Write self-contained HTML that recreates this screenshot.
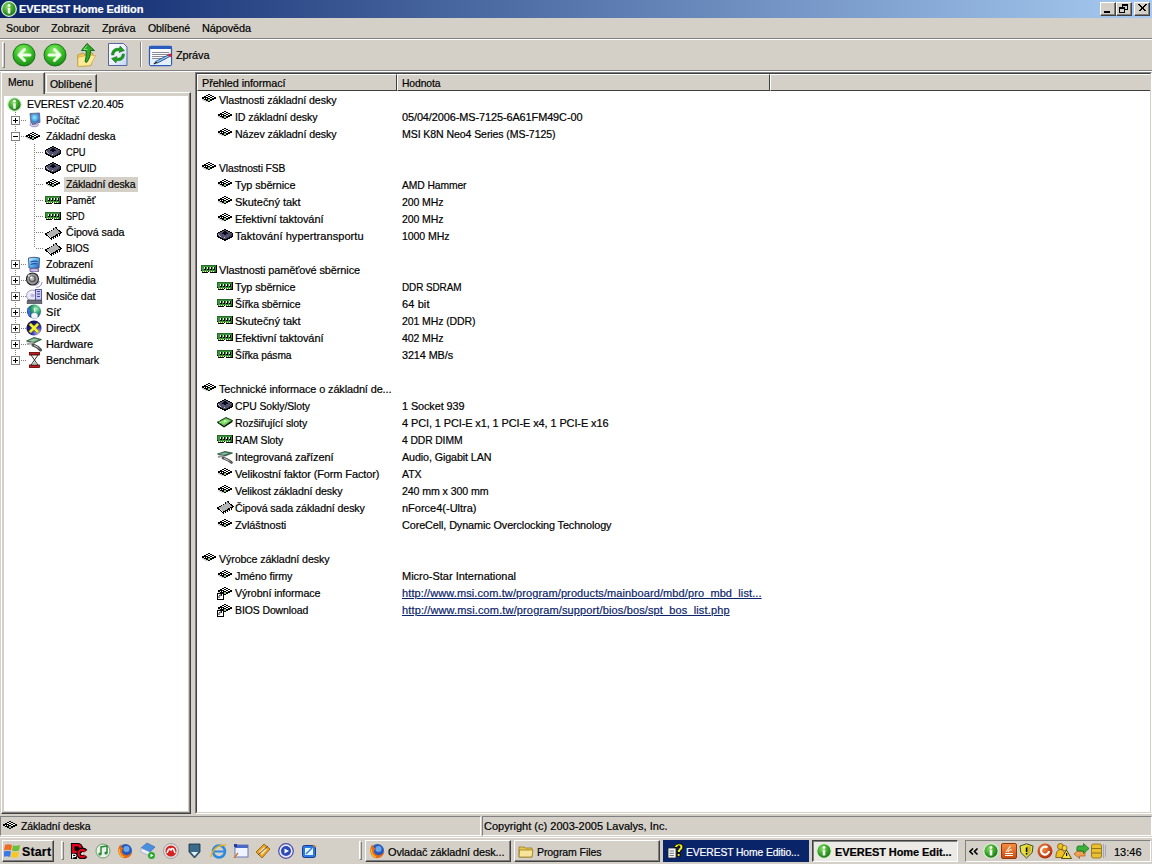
<!DOCTYPE html><html><head><meta charset="utf-8"><title>EVEREST</title><style>
*{margin:0;padding:0;box-sizing:border-box}
html,body{width:1152px;height:864px;overflow:hidden;background:#D4D0C8;font-family:"Liberation Sans",sans-serif;font-size:11px;color:#000}
.a{position:absolute}
.t{position:absolute;white-space:nowrap;line-height:13px;-webkit-text-stroke:0.2px currentColor}
.wb{position:absolute;top:2px;width:16px;height:14px;background:#D4D0C8;border-top:1px solid #fff;border-left:1px solid #fff;border-right:1px solid #404040;border-bottom:1px solid #404040;box-shadow:inset -1px -1px 0 #808080}
.hl{position:absolute;height:1px}
.vl{position:absolute;width:1px}
.btn{position:absolute;background:#D4D0C8;border-top:1px solid #fff;border-left:1px solid #fff;border-right:1px solid #404040;border-bottom:1px solid #404040;box-shadow:inset -1px -1px 0 #808080}
.sunk{position:absolute;border-top:1px solid #808080;border-left:1px solid #808080;border-bottom:1px solid #fff;border-right:1px solid #fff}
.dotv{position:absolute;width:1px;background:repeating-linear-gradient(to bottom,#808080 0 1px,transparent 1px 2px)}
.doth{position:absolute;height:1px;background:repeating-linear-gradient(to right,#808080 0 1px,transparent 1px 2px)}
.hbtn{position:absolute;background:#D4D0C8;border-top:1px solid #fff;border-left:1px solid #fff;border-right:1px solid #404040;border-bottom:1px solid #404040}
.lnk{color:#0A246A;text-decoration:underline}
</style></head><body>
<div class="a" style="left:0;top:0;width:1152px;height:18px;background:linear-gradient(to right,#0A246A,#A6CAF0)"></div>
<svg class="a" style="left:1px;top:1px" width="16" height="16" viewBox="0 0 16 16"><defs><radialGradient id="gi1_1" cx="40%" cy="35%" r="65%"><stop offset="0" stop-color="#8ADA6A"/><stop offset="0.6" stop-color="#38A02A"/><stop offset="1" stop-color="#1C7018"/></radialGradient></defs>
<circle cx="8.0" cy="8.0" r="7.3" fill="url(#gi1_1)" stroke="#D8F0D0" stroke-width="1.3"/>
<rect x="6.72" y="6.72" width="2.56" height="5.76" fill="#F4FFF0"/><circle cx="8.0" cy="4.48" r="1.44" fill="#F4FFF0"/></svg>
<div class="t" style="left:19px;top:3px;color:#fff;font-weight:bold;letter-spacing:-0.042px">EVEREST Home Edition</div>
<div class="wb" style="left:1100px"></div><div class="wb" style="left:1116px"></div><div class="wb" style="left:1134px"></div>
<div class="a" style="left:1104px;top:11px;width:6px;height:2px;background:#000"></div>
<svg class="a" style="left:1119px;top:4px" width="10" height="10" viewBox="0 0 10 10"><g fill="none" stroke="#000" shape-rendering="crispEdges"><rect x="3.5" y="0.5" width="5" height="5"/><line x1="3" y1="1.5" x2="9" y2="1.5"/><rect x="0.5" y="3.5" width="5" height="5" fill="#D4D0C8"/><line x1="0" y1="4.5" x2="6" y2="4.5"/></g></svg>
<svg class="a" style="left:1138px;top:4px" width="9" height="8" viewBox="0 0 9 8"><path d="M0.5 0.5 L7.5 7.5 M1.5 0.5 L8.5 7.5 M7.5 0.5 L0.5 7.5 M8.5 0.5 L1.5 7.5" stroke="#000" stroke-width="1" shape-rendering="crispEdges"/></svg>
<div class="t" style="left:6px;top:22px;;letter-spacing:-0.100px;transform:scaleX(0.9576);transform-origin:0 0">Soubor</div>
<div class="t" style="left:51px;top:22px;;letter-spacing:-0.100px;transform:scaleX(0.9859);transform-origin:0 0">Zobrazit</div>
<div class="t" style="left:102px;top:22px;;letter-spacing:-0.100px;transform:scaleX(0.9926);transform-origin:0 0">Zpráva</div>
<div class="t" style="left:148px;top:22px;;letter-spacing:-0.100px;transform:scaleX(0.9555);transform-origin:0 0">Oblíbené</div>
<div class="t" style="left:202px;top:22px;;letter-spacing:-0.100px;transform:scaleX(0.9908);transform-origin:0 0">Nápověda</div>
<div class="hl" style="left:0;top:38px;width:1152px;background:#808080"></div>
<div class="hl" style="left:0;top:39px;width:1152px;background:#fff"></div>
<div class="a" style="left:2px;top:42px;width:3px;height:26px;border-left:1px solid #fff;border-top:1px solid #fff;border-right:1px solid #808080;border-bottom:1px solid #808080"></div>
<svg class="a" style="left:12px;top:43px" width="24" height="24" viewBox="0 0 24 24"><defs><radialGradient id="gcb" cx="45%" cy="30%" r="70%"><stop offset="0" stop-color="#8EF06A"/><stop offset="0.55" stop-color="#3CC02A"/><stop offset="1" stop-color="#1A8A14"/></radialGradient></defs>
<circle cx="12" cy="12" r="11" fill="url(#gcb)" stroke="#18781A" stroke-width="1"/><path d="M12.5 6.5 L7 12 L12.5 17.5 M7.5 12 L18 12" stroke="#F0FFE8" stroke-width="3" fill="none" stroke-linecap="round" stroke-linejoin="round"/></svg>
<svg class="a" style="left:43px;top:43px" width="24" height="24" viewBox="0 0 24 24"><defs><radialGradient id="gcf" cx="45%" cy="30%" r="70%"><stop offset="0" stop-color="#8EF06A"/><stop offset="0.55" stop-color="#3CC02A"/><stop offset="1" stop-color="#1A8A14"/></radialGradient></defs>
<circle cx="12" cy="12" r="11" fill="url(#gcf)" stroke="#18781A" stroke-width="1"/><path d="M11.5 6.5 L17 12 L11.5 17.5 M16.5 12 L6 12" stroke="#F0FFE8" stroke-width="3" fill="none" stroke-linecap="round" stroke-linejoin="round"/></svg>
<svg class="a" style="left:75px;top:42px" width="22" height="25" viewBox="0 0 22 25"><path d="M2.5 13 L8 11 L9 12.5 L17 10.5 L18.5 14 L16 23.5 L3 24.5 Z" fill="#EBC85A" stroke="#C09838" stroke-width="0.9"/>
<path d="M3 15.5 L13 13 L20.5 13.5 L15.5 23.5 L3 24.5 Z" fill="#FBEA98" stroke="#D0A848" stroke-width="0.7"/>
<path d="M6.5 8.5 L12 1.5 L19.5 8.5 L15.5 8.5 C15.5 13 14.5 17 11.5 20.5 L10 19.5 C11 16 11.5 12.5 11 8.5 Z" fill="#2EAA2A" stroke="#0F5A10" stroke-width="0.9" stroke-linejoin="round"/>
<path d="M12 3.5 L8.8 7.6 L12.5 7.6" stroke="#8AE880" stroke-width="1" fill="none"/></svg>
<svg class="a" style="left:107px;top:42px" width="22" height="25" viewBox="0 0 22 25"><defs><linearGradient id="rfg" x1="0" y1="0" x2="1" y2="1"><stop offset="0" stop-color="#FFFFFF"/><stop offset="0.6" stop-color="#E8ECFF"/><stop offset="1" stop-color="#B8D8F4"/></linearGradient></defs>
<path d="M1.5 1.5 L16.5 1.5 L20 5 L20 23.5 L1.5 23.5 Z" fill="url(#rfg)" stroke="#5A64A0" stroke-width="1"/>
<path d="M4.5 13 C4.5 8 8 5.5 12.5 6.5 L13 4 L17.5 8.5 L12 10.5 L12.5 8.8 C9.5 8.2 7 10 6.8 13 Z" fill="#1E9E1E" stroke="#0A600A" stroke-width="0.5"/>
<path d="M17.5 12 C17.5 17 14 19.5 9.5 18.5 L9 21 L4.5 16.5 L10 14.5 L9.5 16.2 C12.5 16.8 15 15 15.2 12 Z" fill="#1E9E1E" stroke="#0A600A" stroke-width="0.5"/></svg>
<div class="a" style="left:140px;top:42px;width:2px;height:25px;border-left:1px solid #808080;border-right:1px solid #fff"></div>
<svg class="a" style="left:148px;top:45px" width="26" height="22" viewBox="0 0 26 22"><rect x="1.5" y="1.5" width="22" height="19" rx="1.5" fill="#fff" stroke="#2A5CC0" stroke-width="1.3"/>
<rect x="1" y="1" width="23" height="3" rx="1" fill="#2A5CC0"/>
<g stroke="#8A8A9E" stroke-width="1" shape-rendering="crispEdges"><line x1="4" y1="7.5" x2="21" y2="7.5"/><line x1="4" y1="9.5" x2="21" y2="9.5"/><line x1="4" y1="11.5" x2="19" y2="11.5"/><line x1="4" y1="13.5" x2="15" y2="13.5"/></g>
<rect x="2" y="14" width="21" height="6" fill="#E4F0FC"/>
<path d="M8 17.5 L21.5 10.5" stroke="#1A3A7A" stroke-width="3"/><path d="M8.5 17.2 L21.3 10.6" stroke="#8ACCF8" stroke-width="1.5"/>
<path d="M6 19 L8.5 17.2" stroke="#202020" stroke-width="1.5"/>
<circle cx="22" cy="10.3" r="1.8" fill="#D02030"/></svg>
<div class="t" style="left:176px;top:49px;;letter-spacing:-0.100px;transform:scaleX(0.9926);transform-origin:0 0">Zpráva</div>
<div class="hl" style="left:0;top:70px;width:1152px;background:#808080"></div>
<div class="hl" style="left:0;top:71px;width:1152px;background:#fff"></div>
<div class="a" style="left:46px;top:74px;width:51px;height:18px;border-top:1px solid #fff;border-left:1px solid #fff;border-right:1px solid #404040;box-shadow:inset -1px 0 0 #808080;background:#D4D0C8"></div>
<div class="t" style="left:50px;top:78px;;letter-spacing:-0.100px;transform:scaleX(0.9555);transform-origin:0 0">Oblíbené</div>
<div class="a" style="left:1px;top:92px;width:190px;height:722px;border-top:1px solid #fff;border-left:1px solid #fff;border-right:1px solid #404040;border-bottom:1px solid #404040;box-shadow:inset -1px -1px 0 #808080"></div>
<div class="a" style="left:1px;top:72px;width:44px;height:22px;border-top:1px solid #fff;border-left:1px solid #fff;border-right:1px solid #404040;box-shadow:inset -1px 0 0 #808080;background:#D4D0C8"></div>
<div class="t" style="left:8px;top:76px;;letter-spacing:-0.100px;transform:scaleX(0.9364);transform-origin:0 0">Menu</div>
<div class="a" style="left:4px;top:96px;width:184px;height:715px;background:#fff"></div>
<div class="dotv" style="left:15px;top:112px;height:248px"></div>
<div class="dotv" style="left:34px;top:144px;height:104px"></div>
<svg class="a" style="left:7px;top:97px" width="15" height="15" viewBox="0 0 15 15"><defs><radialGradient id="gi7_97" cx="40%" cy="35%" r="65%"><stop offset="0" stop-color="#8ADA6A"/><stop offset="0.6" stop-color="#38A02A"/><stop offset="1" stop-color="#1C7018"/></radialGradient></defs>
<circle cx="7.5" cy="7.5" r="6.8" fill="url(#gi7_97)" stroke="#D8F0D0" stroke-width="1.3"/>
<rect x="6.3" y="6.3" width="2.4" height="5.3999999999999995" fill="#F4FFF0"/><circle cx="7.5" cy="4.2" r="1.3499999999999999" fill="#F4FFF0"/></svg>
<div class="t" style="left:27px;top:98px;;letter-spacing:-0.100px;transform:scaleX(0.9561);transform-origin:0 0">EVEREST v2.20.405</div>
<div class="doth" style="left:21px;top:120px;width:5px"></div>
<div class="a" style="left:11px;top:116px;width:9px;height:9px;border:1px solid #808080;background:#fff"></div>
<div class="a" style="left:13px;top:120px;width:5px;height:1px;background:#000"></div>
<div class="a" style="left:15px;top:118px;width:1px;height:5px;background:#000"></div>
<svg class="a" style="left:26px;top:112px" width="16" height="16" viewBox="0 0 16 16"><defs><radialGradient id="pcg" cx="45%" cy="40%" r="70%"><stop offset="0" stop-color="#9AEAFF"/><stop offset="0.6" stop-color="#4AA8E8"/><stop offset="1" stop-color="#2A5AA8"/></radialGradient></defs>
<path d="M4 1.5 L13.5 1 L14 10.5 L5 11.5 Z" fill="#6A88B8" stroke="#4A6088" stroke-width="0.8"/>
<path d="M5 2.5 L12.5 2.2 L12.8 9.5 L5.8 10.3 Z" fill="url(#pcg)"/>
<path d="M4 12.5 C4 10.5 12 10 12.5 12.5 C12.5 15.5 4 15.5 4 12.5 Z" fill="#D8D0F0" stroke="#7A6AA8" stroke-width="0.7"/>
<path d="M6 11 L10 10.5 L10.5 12.5 L6 13 Z" fill="#5A70A8"/></svg>
<div class="t" style="left:46px;top:114px;;letter-spacing:-0.100px;transform:scaleX(0.9283);transform-origin:0 0">Počítač</div>
<div class="doth" style="left:21px;top:136px;width:5px"></div>
<div class="a" style="left:11px;top:132px;width:9px;height:9px;border:1px solid #808080;background:#fff"></div>
<div class="a" style="left:13px;top:136px;width:5px;height:1px;background:#000"></div>
<svg class="a" style="left:26px;top:132px" width="14" height="8" shape-rendering="crispEdges"><rect x="6" y="0" width="2" height="1" fill="#000"/><rect x="4" y="1" width="2" height="1" fill="#000"/><rect x="6" y="1" width="2" height="1" fill="#fff"/><rect x="8" y="1" width="2" height="1" fill="#000"/><rect x="2" y="2" width="2" height="1" fill="#000"/><rect x="4" y="2" width="2" height="1" fill="#fff"/><rect x="6" y="2" width="2" height="1" fill="#000"/><rect x="8" y="2" width="2" height="1" fill="#fff"/><rect x="10" y="2" width="2" height="1" fill="#000"/><rect x="0" y="3" width="6" height="1" fill="#000"/><rect x="6" y="3" width="2" height="1" fill="#fff"/><rect x="8" y="3" width="2" height="1" fill="#000"/><rect x="10" y="3" width="2" height="1" fill="#fff"/><rect x="12" y="3" width="2" height="1" fill="#000"/><rect x="0" y="4" width="2" height="1" fill="#000"/><rect x="2" y="4" width="1" height="1" fill="#fff"/><rect x="3" y="4" width="1" height="1" fill="#000"/><rect x="4" y="4" width="1" height="1" fill="#fff"/><rect x="5" y="4" width="3" height="1" fill="#000"/><rect x="8" y="4" width="2" height="1" fill="#fff"/><rect x="10" y="4" width="4" height="1" fill="#000"/><rect x="0" y="5" width="2" height="1" fill="#D0D0D0"/><rect x="2" y="5" width="4" height="1" fill="#000"/><rect x="6" y="5" width="2" height="1" fill="#86C886"/><rect x="8" y="5" width="4" height="1" fill="#000"/><rect x="1" y="6" width="3" height="1" fill="#D0D0D0"/><rect x="4" y="6" width="2" height="1" fill="#000"/><rect x="6" y="6" width="2" height="1" fill="#86C886"/><rect x="8" y="6" width="2" height="1" fill="#000"/><rect x="3" y="7" width="3" height="1" fill="#D0D0D0"/><rect x="6" y="7" width="2" height="1" fill="#000"/></svg>
<div class="t" style="left:46px;top:130px;;letter-spacing:-0.100px;transform:scaleX(0.9480);transform-origin:0 0">Základní deska</div>
<div class="doth" style="left:36px;top:152px;width:8px"></div>
<svg class="a" style="left:45px;top:146px" width="16" height="12" shape-rendering="crispEdges"><rect x="7" y="0" width="2" height="1" fill="#000"/><rect x="5" y="1" width="2" height="1" fill="#000"/><rect x="7" y="1" width="2" height="1" fill="#52526C"/><rect x="9" y="1" width="2" height="1" fill="#000"/><rect x="3" y="2" width="2" height="1" fill="#000"/><rect x="5" y="2" width="2" height="1" fill="#52526C"/><rect x="7" y="2" width="2" height="1" fill="#080818"/><rect x="9" y="2" width="2" height="1" fill="#52526C"/><rect x="11" y="2" width="2" height="1" fill="#000"/><rect x="1" y="3" width="2" height="1" fill="#000"/><rect x="3" y="3" width="3" height="1" fill="#52526C"/><rect x="6" y="3" width="4" height="1" fill="#080818"/><rect x="10" y="3" width="3" height="1" fill="#52526C"/><rect x="13" y="3" width="2" height="1" fill="#000"/><rect x="0" y="4" width="1" height="1" fill="#000"/><rect x="1" y="4" width="4" height="1" fill="#52526C"/><rect x="5" y="4" width="6" height="1" fill="#080818"/><rect x="11" y="4" width="4" height="1" fill="#52526C"/><rect x="15" y="4" width="1" height="1" fill="#000"/><rect x="0" y="5" width="1" height="1" fill="#000"/><rect x="1" y="5" width="1" height="1" fill="#C0C0D8"/><rect x="2" y="5" width="5" height="1" fill="#52526C"/><rect x="7" y="5" width="2" height="1" fill="#080818"/><rect x="9" y="5" width="5" height="1" fill="#52526C"/><rect x="14" y="5" width="1" height="1" fill="#34344A"/><rect x="15" y="5" width="1" height="1" fill="#000"/><rect x="0" y="6" width="1" height="1" fill="#000"/><rect x="1" y="6" width="1" height="1" fill="#52526C"/><rect x="2" y="6" width="1" height="1" fill="#C0C0D8"/><rect x="3" y="6" width="10" height="1" fill="#52526C"/><rect x="13" y="6" width="2" height="1" fill="#34344A"/><rect x="15" y="6" width="1" height="1" fill="#000"/><rect x="0" y="7" width="2" height="1" fill="#000"/><rect x="2" y="7" width="1" height="1" fill="#52526C"/><rect x="3" y="7" width="1" height="1" fill="#C0C0D8"/><rect x="4" y="7" width="8" height="1" fill="#52526C"/><rect x="12" y="7" width="2" height="1" fill="#34344A"/><rect x="14" y="7" width="2" height="1" fill="#000"/><rect x="1" y="8" width="3" height="1" fill="#000"/><rect x="4" y="8" width="3" height="1" fill="#52526C"/><rect x="7" y="8" width="1" height="1" fill="#C0C0D8"/><rect x="8" y="8" width="3" height="1" fill="#52526C"/><rect x="11" y="8" width="1" height="1" fill="#34344A"/><rect x="12" y="8" width="3" height="1" fill="#000"/><rect x="3" y="9" width="3" height="1" fill="#000"/><rect x="6" y="9" width="3" height="1" fill="#52526C"/><rect x="9" y="9" width="1" height="1" fill="#34344A"/><rect x="10" y="9" width="3" height="1" fill="#000"/><rect x="5" y="10" width="6" height="1" fill="#000"/><rect x="7" y="11" width="2" height="1" fill="#000"/></svg>
<div class="t" style="left:66px;top:146px;;letter-spacing:-0.100px;transform:scaleX(0.8466);transform-origin:0 0">CPU</div>
<div class="doth" style="left:36px;top:168px;width:8px"></div>
<svg class="a" style="left:45px;top:162px" width="16" height="12" shape-rendering="crispEdges"><rect x="7" y="0" width="2" height="1" fill="#000"/><rect x="5" y="1" width="2" height="1" fill="#000"/><rect x="7" y="1" width="2" height="1" fill="#52526C"/><rect x="9" y="1" width="2" height="1" fill="#000"/><rect x="3" y="2" width="2" height="1" fill="#000"/><rect x="5" y="2" width="2" height="1" fill="#52526C"/><rect x="7" y="2" width="2" height="1" fill="#080818"/><rect x="9" y="2" width="2" height="1" fill="#52526C"/><rect x="11" y="2" width="2" height="1" fill="#000"/><rect x="1" y="3" width="2" height="1" fill="#000"/><rect x="3" y="3" width="3" height="1" fill="#52526C"/><rect x="6" y="3" width="4" height="1" fill="#080818"/><rect x="10" y="3" width="3" height="1" fill="#52526C"/><rect x="13" y="3" width="2" height="1" fill="#000"/><rect x="0" y="4" width="1" height="1" fill="#000"/><rect x="1" y="4" width="4" height="1" fill="#52526C"/><rect x="5" y="4" width="6" height="1" fill="#080818"/><rect x="11" y="4" width="4" height="1" fill="#52526C"/><rect x="15" y="4" width="1" height="1" fill="#000"/><rect x="0" y="5" width="1" height="1" fill="#000"/><rect x="1" y="5" width="1" height="1" fill="#C0C0D8"/><rect x="2" y="5" width="5" height="1" fill="#52526C"/><rect x="7" y="5" width="2" height="1" fill="#080818"/><rect x="9" y="5" width="5" height="1" fill="#52526C"/><rect x="14" y="5" width="1" height="1" fill="#34344A"/><rect x="15" y="5" width="1" height="1" fill="#000"/><rect x="0" y="6" width="1" height="1" fill="#000"/><rect x="1" y="6" width="1" height="1" fill="#52526C"/><rect x="2" y="6" width="1" height="1" fill="#C0C0D8"/><rect x="3" y="6" width="10" height="1" fill="#52526C"/><rect x="13" y="6" width="2" height="1" fill="#34344A"/><rect x="15" y="6" width="1" height="1" fill="#000"/><rect x="0" y="7" width="2" height="1" fill="#000"/><rect x="2" y="7" width="1" height="1" fill="#52526C"/><rect x="3" y="7" width="1" height="1" fill="#C0C0D8"/><rect x="4" y="7" width="8" height="1" fill="#52526C"/><rect x="12" y="7" width="2" height="1" fill="#34344A"/><rect x="14" y="7" width="2" height="1" fill="#000"/><rect x="1" y="8" width="3" height="1" fill="#000"/><rect x="4" y="8" width="3" height="1" fill="#52526C"/><rect x="7" y="8" width="1" height="1" fill="#C0C0D8"/><rect x="8" y="8" width="3" height="1" fill="#52526C"/><rect x="11" y="8" width="1" height="1" fill="#34344A"/><rect x="12" y="8" width="3" height="1" fill="#000"/><rect x="3" y="9" width="3" height="1" fill="#000"/><rect x="6" y="9" width="3" height="1" fill="#52526C"/><rect x="9" y="9" width="1" height="1" fill="#34344A"/><rect x="10" y="9" width="3" height="1" fill="#000"/><rect x="5" y="10" width="6" height="1" fill="#000"/><rect x="7" y="11" width="2" height="1" fill="#000"/></svg>
<div class="t" style="left:66px;top:162px;;letter-spacing:-0.100px;transform:scaleX(0.9015);transform-origin:0 0">CPUID</div>
<div class="doth" style="left:36px;top:184px;width:8px"></div>
<svg class="a" style="left:46px;top:179px" width="14" height="8" shape-rendering="crispEdges"><rect x="6" y="0" width="2" height="1" fill="#000"/><rect x="4" y="1" width="2" height="1" fill="#000"/><rect x="6" y="1" width="2" height="1" fill="#fff"/><rect x="8" y="1" width="2" height="1" fill="#000"/><rect x="2" y="2" width="2" height="1" fill="#000"/><rect x="4" y="2" width="2" height="1" fill="#fff"/><rect x="6" y="2" width="2" height="1" fill="#000"/><rect x="8" y="2" width="2" height="1" fill="#fff"/><rect x="10" y="2" width="2" height="1" fill="#000"/><rect x="0" y="3" width="6" height="1" fill="#000"/><rect x="6" y="3" width="2" height="1" fill="#fff"/><rect x="8" y="3" width="2" height="1" fill="#000"/><rect x="10" y="3" width="2" height="1" fill="#fff"/><rect x="12" y="3" width="2" height="1" fill="#000"/><rect x="0" y="4" width="2" height="1" fill="#000"/><rect x="2" y="4" width="1" height="1" fill="#fff"/><rect x="3" y="4" width="1" height="1" fill="#000"/><rect x="4" y="4" width="1" height="1" fill="#fff"/><rect x="5" y="4" width="3" height="1" fill="#000"/><rect x="8" y="4" width="2" height="1" fill="#fff"/><rect x="10" y="4" width="4" height="1" fill="#000"/><rect x="0" y="5" width="2" height="1" fill="#D0D0D0"/><rect x="2" y="5" width="4" height="1" fill="#000"/><rect x="6" y="5" width="2" height="1" fill="#86C886"/><rect x="8" y="5" width="4" height="1" fill="#000"/><rect x="1" y="6" width="3" height="1" fill="#D0D0D0"/><rect x="4" y="6" width="2" height="1" fill="#000"/><rect x="6" y="6" width="2" height="1" fill="#86C886"/><rect x="8" y="6" width="2" height="1" fill="#000"/><rect x="3" y="7" width="3" height="1" fill="#D0D0D0"/><rect x="6" y="7" width="2" height="1" fill="#000"/></svg>
<div class="a" style="left:64px;top:177px;width:74px;height:15px;background:#D4D0C8"></div>
<div class="t" style="left:66px;top:178px;;letter-spacing:-0.100px;transform:scaleX(0.9480);transform-origin:0 0">Základní deska</div>
<div class="doth" style="left:36px;top:200px;width:8px"></div>
<svg class="a" style="left:45px;top:196px" width="16" height="8" shape-rendering="crispEdges"><rect x="0" y="0" width="15" height="1" fill="#2A6A2A"/><rect x="15" y="0" width="1" height="1" fill="#000"/><rect x="0" y="1" width="1" height="1" fill="#2A6A2A"/><rect x="1" y="1" width="13" height="1" fill="#3A963A"/><rect x="14" y="1" width="1" height="1" fill="#2A6A2A"/><rect x="15" y="1" width="1" height="1" fill="#000"/><rect x="0" y="2" width="1" height="1" fill="#2A6A2A"/><rect x="1" y="2" width="2" height="1" fill="#3A963A"/><rect x="3" y="2" width="1" height="1" fill="#D8FFD0"/><rect x="4" y="2" width="1" height="1" fill="#000"/><rect x="5" y="2" width="1" height="1" fill="#3A963A"/><rect x="6" y="2" width="1" height="1" fill="#D8FFD0"/><rect x="7" y="2" width="1" height="1" fill="#000"/><rect x="8" y="2" width="1" height="1" fill="#3A963A"/><rect x="9" y="2" width="1" height="1" fill="#D8FFD0"/><rect x="10" y="2" width="1" height="1" fill="#000"/><rect x="11" y="2" width="1" height="1" fill="#3A963A"/><rect x="12" y="2" width="1" height="1" fill="#D8FFD0"/><rect x="13" y="2" width="1" height="1" fill="#000"/><rect x="14" y="2" width="1" height="1" fill="#3A963A"/><rect x="15" y="2" width="1" height="1" fill="#000"/><rect x="0" y="3" width="1" height="1" fill="#2A6A2A"/><rect x="1" y="3" width="2" height="1" fill="#3A963A"/><rect x="3" y="3" width="1" height="1" fill="#D8FFD0"/><rect x="4" y="3" width="1" height="1" fill="#000"/><rect x="5" y="3" width="1" height="1" fill="#3A963A"/><rect x="6" y="3" width="1" height="1" fill="#D8FFD0"/><rect x="7" y="3" width="1" height="1" fill="#000"/><rect x="8" y="3" width="1" height="1" fill="#3A963A"/><rect x="9" y="3" width="1" height="1" fill="#D8FFD0"/><rect x="10" y="3" width="1" height="1" fill="#000"/><rect x="11" y="3" width="1" height="1" fill="#3A963A"/><rect x="12" y="3" width="1" height="1" fill="#D8FFD0"/><rect x="13" y="3" width="1" height="1" fill="#000"/><rect x="14" y="3" width="1" height="1" fill="#3A963A"/><rect x="15" y="3" width="1" height="1" fill="#000"/><rect x="0" y="4" width="1" height="1" fill="#2A6A2A"/><rect x="1" y="4" width="2" height="1" fill="#3A963A"/><rect x="3" y="4" width="2" height="1" fill="#000"/><rect x="5" y="4" width="1" height="1" fill="#3A963A"/><rect x="6" y="4" width="2" height="1" fill="#000"/><rect x="8" y="4" width="1" height="1" fill="#3A963A"/><rect x="9" y="4" width="2" height="1" fill="#000"/><rect x="11" y="4" width="1" height="1" fill="#3A963A"/><rect x="12" y="4" width="2" height="1" fill="#000"/><rect x="14" y="4" width="1" height="1" fill="#3A963A"/><rect x="15" y="4" width="1" height="1" fill="#000"/><rect x="0" y="5" width="1" height="1" fill="#000"/><rect x="1" y="5" width="13" height="1" fill="#3A963A"/><rect x="14" y="5" width="1" height="1" fill="#2A6A2A"/><rect x="15" y="5" width="1" height="1" fill="#000"/><rect x="1" y="6" width="1" height="1" fill="#3A963A"/><rect x="2" y="6" width="1" height="1" fill="#F0F0A0"/><rect x="3" y="6" width="1" height="1" fill="#3A963A"/><rect x="4" y="6" width="1" height="1" fill="#F0F0A0"/><rect x="5" y="6" width="1" height="1" fill="#3A963A"/><rect x="6" y="6" width="1" height="1" fill="#F0F0A0"/><rect x="7" y="6" width="1" height="1" fill="#000"/><rect x="8" y="6" width="1" height="1" fill="#F0F0A0"/><rect x="9" y="6" width="1" height="1" fill="#3A963A"/><rect x="10" y="6" width="1" height="1" fill="#F0F0A0"/><rect x="11" y="6" width="1" height="1" fill="#3A963A"/><rect x="12" y="6" width="1" height="1" fill="#F0F0A0"/><rect x="13" y="6" width="1" height="1" fill="#3A963A"/><rect x="14" y="6" width="1" height="1" fill="#2A6A2A"/><rect x="15" y="6" width="1" height="1" fill="#000"/><rect x="1" y="7" width="6" height="1" fill="#000"/><rect x="9" y="7" width="7" height="1" fill="#000"/></svg>
<div class="t" style="left:66px;top:194px;;letter-spacing:-0.100px;transform:scaleX(0.9084);transform-origin:0 0">Paměť</div>
<div class="doth" style="left:36px;top:216px;width:8px"></div>
<svg class="a" style="left:45px;top:212px" width="16" height="8" shape-rendering="crispEdges"><rect x="0" y="0" width="15" height="1" fill="#2A6A2A"/><rect x="15" y="0" width="1" height="1" fill="#000"/><rect x="0" y="1" width="1" height="1" fill="#2A6A2A"/><rect x="1" y="1" width="13" height="1" fill="#3A963A"/><rect x="14" y="1" width="1" height="1" fill="#2A6A2A"/><rect x="15" y="1" width="1" height="1" fill="#000"/><rect x="0" y="2" width="1" height="1" fill="#2A6A2A"/><rect x="1" y="2" width="2" height="1" fill="#3A963A"/><rect x="3" y="2" width="1" height="1" fill="#D8FFD0"/><rect x="4" y="2" width="1" height="1" fill="#000"/><rect x="5" y="2" width="1" height="1" fill="#3A963A"/><rect x="6" y="2" width="1" height="1" fill="#D8FFD0"/><rect x="7" y="2" width="1" height="1" fill="#000"/><rect x="8" y="2" width="1" height="1" fill="#3A963A"/><rect x="9" y="2" width="1" height="1" fill="#D8FFD0"/><rect x="10" y="2" width="1" height="1" fill="#000"/><rect x="11" y="2" width="1" height="1" fill="#3A963A"/><rect x="12" y="2" width="1" height="1" fill="#D8FFD0"/><rect x="13" y="2" width="1" height="1" fill="#000"/><rect x="14" y="2" width="1" height="1" fill="#3A963A"/><rect x="15" y="2" width="1" height="1" fill="#000"/><rect x="0" y="3" width="1" height="1" fill="#2A6A2A"/><rect x="1" y="3" width="2" height="1" fill="#3A963A"/><rect x="3" y="3" width="1" height="1" fill="#D8FFD0"/><rect x="4" y="3" width="1" height="1" fill="#000"/><rect x="5" y="3" width="1" height="1" fill="#3A963A"/><rect x="6" y="3" width="1" height="1" fill="#D8FFD0"/><rect x="7" y="3" width="1" height="1" fill="#000"/><rect x="8" y="3" width="1" height="1" fill="#3A963A"/><rect x="9" y="3" width="1" height="1" fill="#D8FFD0"/><rect x="10" y="3" width="1" height="1" fill="#000"/><rect x="11" y="3" width="1" height="1" fill="#3A963A"/><rect x="12" y="3" width="1" height="1" fill="#D8FFD0"/><rect x="13" y="3" width="1" height="1" fill="#000"/><rect x="14" y="3" width="1" height="1" fill="#3A963A"/><rect x="15" y="3" width="1" height="1" fill="#000"/><rect x="0" y="4" width="1" height="1" fill="#2A6A2A"/><rect x="1" y="4" width="2" height="1" fill="#3A963A"/><rect x="3" y="4" width="2" height="1" fill="#000"/><rect x="5" y="4" width="1" height="1" fill="#3A963A"/><rect x="6" y="4" width="2" height="1" fill="#000"/><rect x="8" y="4" width="1" height="1" fill="#3A963A"/><rect x="9" y="4" width="2" height="1" fill="#000"/><rect x="11" y="4" width="1" height="1" fill="#3A963A"/><rect x="12" y="4" width="2" height="1" fill="#000"/><rect x="14" y="4" width="1" height="1" fill="#3A963A"/><rect x="15" y="4" width="1" height="1" fill="#000"/><rect x="0" y="5" width="1" height="1" fill="#000"/><rect x="1" y="5" width="13" height="1" fill="#3A963A"/><rect x="14" y="5" width="1" height="1" fill="#2A6A2A"/><rect x="15" y="5" width="1" height="1" fill="#000"/><rect x="1" y="6" width="1" height="1" fill="#3A963A"/><rect x="2" y="6" width="1" height="1" fill="#F0F0A0"/><rect x="3" y="6" width="1" height="1" fill="#3A963A"/><rect x="4" y="6" width="1" height="1" fill="#F0F0A0"/><rect x="5" y="6" width="1" height="1" fill="#3A963A"/><rect x="6" y="6" width="1" height="1" fill="#F0F0A0"/><rect x="7" y="6" width="1" height="1" fill="#000"/><rect x="8" y="6" width="1" height="1" fill="#F0F0A0"/><rect x="9" y="6" width="1" height="1" fill="#3A963A"/><rect x="10" y="6" width="1" height="1" fill="#F0F0A0"/><rect x="11" y="6" width="1" height="1" fill="#3A963A"/><rect x="12" y="6" width="1" height="1" fill="#F0F0A0"/><rect x="13" y="6" width="1" height="1" fill="#3A963A"/><rect x="14" y="6" width="1" height="1" fill="#2A6A2A"/><rect x="15" y="6" width="1" height="1" fill="#000"/><rect x="1" y="7" width="6" height="1" fill="#000"/><rect x="9" y="7" width="7" height="1" fill="#000"/></svg>
<div class="t" style="left:66px;top:210px;;letter-spacing:-0.100px;transform:scaleX(0.8250);transform-origin:0 0">SPD</div>
<div class="doth" style="left:36px;top:232px;width:8px"></div>
<svg class="a" style="left:45px;top:227px" width="17" height="13" viewBox="0 0 17 13"><g shape-rendering="crispEdges"><rect x="6" y="11" width="1" height="2" fill="#000"/><rect x="8" y="10" width="1" height="2" fill="#000"/><rect x="10" y="9" width="1" height="2" fill="#000"/><rect x="12" y="8" width="1" height="2" fill="#000"/><rect x="14" y="7" width="1" height="2" fill="#000"/><rect x="15" y="5" width="1" height="2" fill="#000"/><polygon points="0.5,7 11,0.5 16,5.5 5.5,11.5" fill="#B4B4B4"/><path d="M1.5 7.5 L5.5 11" stroke="#F4F4F4" stroke-width="1.2"/><path d="M11 1 L16 5.5 L5.5 11.5 L0.5 7" fill="none" stroke="#000" stroke-width="1"/><path d="M0.5 7 L11 0.5" fill="none" stroke="#000" stroke-width="1" stroke-dasharray="1.2 1"/><rect x="10" y="0" width="2" height="1" fill="#000"/></g></svg>
<div class="t" style="left:66px;top:226px;;letter-spacing:-0.100px;transform:scaleX(0.9725);transform-origin:0 0">Čipová sada</div>
<div class="doth" style="left:36px;top:248px;width:8px"></div>
<svg class="a" style="left:45px;top:243px" width="17" height="13" viewBox="0 0 17 13"><g shape-rendering="crispEdges"><rect x="6" y="11" width="1" height="2" fill="#000"/><rect x="8" y="10" width="1" height="2" fill="#000"/><rect x="10" y="9" width="1" height="2" fill="#000"/><rect x="12" y="8" width="1" height="2" fill="#000"/><rect x="14" y="7" width="1" height="2" fill="#000"/><rect x="15" y="5" width="1" height="2" fill="#000"/><polygon points="0.5,7 11,0.5 16,5.5 5.5,11.5" fill="#B4B4B4"/><path d="M1.5 7.5 L5.5 11" stroke="#F4F4F4" stroke-width="1.2"/><path d="M11 1 L16 5.5 L5.5 11.5 L0.5 7" fill="none" stroke="#000" stroke-width="1"/><path d="M0.5 7 L11 0.5" fill="none" stroke="#000" stroke-width="1" stroke-dasharray="1.2 1"/><rect x="10" y="0" width="2" height="1" fill="#000"/></g></svg>
<div class="t" style="left:66px;top:242px;;letter-spacing:-0.100px;transform:scaleX(0.8886);transform-origin:0 0">BIOS</div>
<div class="doth" style="left:21px;top:264px;width:5px"></div>
<div class="a" style="left:11px;top:260px;width:9px;height:9px;border:1px solid #808080;background:#fff"></div>
<div class="a" style="left:13px;top:264px;width:5px;height:1px;background:#000"></div>
<div class="a" style="left:15px;top:262px;width:1px;height:5px;background:#000"></div>
<svg class="a" style="left:26px;top:256px" width="16" height="16" viewBox="0 0 16 16"><defs><linearGradient id="dsg" x1="0" y1="0" x2="1" y2="1"><stop offset="0" stop-color="#D8FCFF"/><stop offset="0.5" stop-color="#58B8E8"/><stop offset="1" stop-color="#2A58B8"/></linearGradient></defs>
<path d="M2.5 2 Q8 0.5 13.5 2 L13 12 Q8 13 3 12 Z" fill="url(#dsg)" stroke="#3A4A88" stroke-width="0.9"/>
<path d="M4.5 6 Q8 4.5 11.5 5.5 M4.5 8.5 Q8 7 11.5 8" stroke="#2A4AA8" stroke-width="1.1" fill="none"/>
<path d="M4 13 Q8 11.5 12.5 13 L12.5 15.5 Q8 16.5 4 15.5 Z" fill="#C8C0E8" stroke="#5A4A88" stroke-width="0.8"/></svg>
<div class="t" style="left:46px;top:258px;;letter-spacing:-0.100px;transform:scaleX(0.9665);transform-origin:0 0">Zobrazení</div>
<div class="doth" style="left:21px;top:280px;width:5px"></div>
<div class="a" style="left:11px;top:276px;width:9px;height:9px;border:1px solid #808080;background:#fff"></div>
<div class="a" style="left:13px;top:280px;width:5px;height:1px;background:#000"></div>
<div class="a" style="left:15px;top:278px;width:1px;height:5px;background:#000"></div>
<svg class="a" style="left:26px;top:272px" width="17" height="17" viewBox="0 0 17 17"><circle cx="6.5" cy="7" r="6" fill="#9A9A9A" stroke="#202020" stroke-width="1.1"/>
<circle cx="6.5" cy="7" r="3.6" fill="#606060"/><circle cx="6" cy="6.5" r="2.2" fill="#B8B8B8"/><circle cx="5.3" cy="5.5" r="1.1" fill="#fff"/>
<circle cx="2.8" cy="3.5" r="1" fill="#F0F0F0"/>
<path d="M9.5 13.5 Q13 12.5 13.5 9 M10.5 15.5 Q15.5 14.5 16 10" stroke="#8A8AC8" stroke-width="1" fill="none"/></svg>
<div class="t" style="left:46px;top:274px;;letter-spacing:-0.100px;transform:scaleX(0.9543);transform-origin:0 0">Multimédia</div>
<div class="doth" style="left:21px;top:296px;width:5px"></div>
<div class="a" style="left:11px;top:292px;width:9px;height:9px;border:1px solid #808080;background:#fff"></div>
<div class="a" style="left:13px;top:296px;width:5px;height:1px;background:#000"></div>
<div class="a" style="left:15px;top:294px;width:1px;height:5px;background:#000"></div>
<svg class="a" style="left:26px;top:288px" width="17" height="16" viewBox="0 0 17 16"><ellipse cx="6.5" cy="7.5" rx="6" ry="5.5" fill="#E8E8F8" stroke="#8A8AB0" stroke-width="0.8"/>
<ellipse cx="6.5" cy="7.5" rx="2" ry="1.8" fill="#B8B8D8"/><path d="M3 5 Q5 3.5 7 4" stroke="#fff" stroke-width="1" fill="none"/>
<rect x="9.5" y="1.5" width="6" height="11" fill="#C8C8F0" stroke="#3A3A88" stroke-width="0.8"/>
<path d="M11 3.5 L14 3.5 M11 6 L14 6 M11 8.5 L14 8.5" stroke="#3A3A98" stroke-width="0.9"/>
<path d="M1.5 12 L15.5 12 L16 15.5 L1 15.5 Z" fill="#6A6A78" stroke="#303040" stroke-width="0.6"/></svg>
<div class="t" style="left:46px;top:290px;;letter-spacing:-0.100px;transform:scaleX(0.9690);transform-origin:0 0">Nosiče dat</div>
<div class="doth" style="left:21px;top:312px;width:5px"></div>
<div class="a" style="left:11px;top:308px;width:9px;height:9px;border:1px solid #808080;background:#fff"></div>
<div class="a" style="left:13px;top:312px;width:5px;height:1px;background:#000"></div>
<div class="a" style="left:15px;top:310px;width:1px;height:5px;background:#000"></div>
<svg class="a" style="left:26px;top:304px" width="16" height="16" viewBox="0 0 16 16"><defs><radialGradient id="ng" cx="65%" cy="30%" r="75%"><stop offset="0" stop-color="#A8F0C0"/><stop offset="0.45" stop-color="#2A9A6A"/><stop offset="1" stop-color="#10308A"/></radialGradient></defs>
<circle cx="8" cy="7.5" r="7" fill="url(#ng)"/><path d="M2 4 Q4 9 3 12" stroke="#3A70D8" stroke-width="2.2" fill="none"/>
<path d="M8.5 4 L9 8" stroke="#E8F8F0" stroke-width="1.2"/>
<ellipse cx="8.5" cy="11.8" rx="3.3" ry="3" fill="#F6F6FF" stroke="#B0B0D0" stroke-width="0.6"/></svg>
<div class="t" style="left:46px;top:306px;">Síť</div>
<div class="doth" style="left:21px;top:328px;width:5px"></div>
<div class="a" style="left:11px;top:324px;width:9px;height:9px;border:1px solid #808080;background:#fff"></div>
<div class="a" style="left:13px;top:328px;width:5px;height:1px;background:#000"></div>
<div class="a" style="left:15px;top:326px;width:1px;height:5px;background:#000"></div>
<svg class="a" style="left:26px;top:320px" width="16" height="16" viewBox="0 0 16 16"><defs><radialGradient id="dxg" cx="75%" cy="80%" r="85%"><stop offset="0" stop-color="#C0B8F0"/><stop offset="0.45" stop-color="#3030B0"/><stop offset="1" stop-color="#0A0A50"/></radialGradient></defs>
<circle cx="8" cy="8" r="7.6" fill="url(#dxg)"/>
<path d="M2.8 4.8 L4.8 2.8 L8 6 L11.2 2.8 L13.2 4.8 L10 8 L13.2 11.2 L11.2 13.2 L8 10 L4.8 13.2 L2.8 11.2 L6 8 Z" fill="#F0F030" stroke="#707000" stroke-width="0.5"/></svg>
<div class="t" style="left:46px;top:322px;;letter-spacing:-0.100px;transform:scaleX(0.9729);transform-origin:0 0">DirectX</div>
<div class="doth" style="left:21px;top:344px;width:5px"></div>
<div class="a" style="left:11px;top:340px;width:9px;height:9px;border:1px solid #808080;background:#fff"></div>
<div class="a" style="left:13px;top:344px;width:5px;height:1px;background:#000"></div>
<div class="a" style="left:15px;top:342px;width:1px;height:5px;background:#000"></div>
<svg class="a" style="left:26px;top:336px" width="16" height="16" viewBox="0 0 16 16"><path d="M0.5 5 L8 1.5 L15.5 3.5 L8 7 Z" fill="#4A8A5A" stroke="#203A28" stroke-width="0.7"/>
<path d="M2.5 4.8 L8 2.5 L12.5 3.6 L7.5 5.8 Z" fill="#9AC8A8"/>
<path d="M1 8 L6 7 L8.5 8.5" stroke="#A8A8A8" stroke-width="2.4" fill="none"/>
<path d="M7 9 C10 10 12.5 11.5 14.5 14" stroke="#505050" stroke-width="3" fill="none" stroke-linecap="round"/>
<path d="M8 9.5 C10.5 10.3 12 11.2 13 12.5" stroke="#E0E0E0" stroke-width="0.9" fill="none"/></svg>
<div class="t" style="left:46px;top:338px;;letter-spacing:-0.084px">Hardware</div>
<div class="doth" style="left:21px;top:360px;width:5px"></div>
<div class="a" style="left:11px;top:356px;width:9px;height:9px;border:1px solid #808080;background:#fff"></div>
<div class="a" style="left:13px;top:360px;width:5px;height:1px;background:#000"></div>
<div class="a" style="left:15px;top:358px;width:1px;height:5px;background:#000"></div>
<svg class="a" style="left:29px;top:352px" width="11" height="16" viewBox="0 0 11 16"><rect x="0.5" y="0.5" width="10" height="2.5" fill="#D01818" stroke="#500" stroke-width="0.8"/>
<rect x="0.5" y="13" width="10" height="2.5" fill="#D01818" stroke="#500" stroke-width="0.8"/>
<path d="M2 3 L9 3 L5.5 8 L9 13 L2 13 L5.5 8 Z" fill="#F4F4F0" stroke="#202020" stroke-width="0.9"/>
<path d="M3.3 12.2 L7.7 12.2 L5.5 9.5 Z" fill="#A8C8B8"/></svg>
<div class="t" style="left:46px;top:354px;;letter-spacing:-0.100px;transform:scaleX(0.9664);transform-origin:0 0">Benchmark</div>
<div class="sunk" style="left:195px;top:72px;width:957px;height:742px"></div>
<div class="a" style="left:196px;top:73px;width:955px;height:740px;background:#fff;border-top:1px solid #404040;border-left:1px solid #404040;border-bottom:1px solid #D4D0C8;border-right:1px solid #D4D0C8"></div>
<div class="hbtn" style="left:197px;top:74px;width:200px;height:17px"></div>
<div class="hbtn" style="left:397px;top:74px;width:373px;height:17px"></div>
<div class="hbtn" style="left:770px;top:74px;width:380px;height:17px;border-right:none"></div>
<div class="t" style="left:202px;top:77px;;letter-spacing:-0.100px;transform:scaleX(0.9868);transform-origin:0 0">Přehled informací</div>
<div class="t" style="left:402px;top:77px;;letter-spacing:-0.100px;transform:scaleX(0.9392);transform-origin:0 0">Hodnota</div>
<svg class="a" style="left:202px;top:94px" width="14" height="8" shape-rendering="crispEdges"><rect x="6" y="0" width="2" height="1" fill="#000"/><rect x="4" y="1" width="2" height="1" fill="#000"/><rect x="6" y="1" width="2" height="1" fill="#fff"/><rect x="8" y="1" width="2" height="1" fill="#000"/><rect x="2" y="2" width="2" height="1" fill="#000"/><rect x="4" y="2" width="2" height="1" fill="#fff"/><rect x="6" y="2" width="2" height="1" fill="#000"/><rect x="8" y="2" width="2" height="1" fill="#fff"/><rect x="10" y="2" width="2" height="1" fill="#000"/><rect x="0" y="3" width="6" height="1" fill="#000"/><rect x="6" y="3" width="2" height="1" fill="#fff"/><rect x="8" y="3" width="2" height="1" fill="#000"/><rect x="10" y="3" width="2" height="1" fill="#fff"/><rect x="12" y="3" width="2" height="1" fill="#000"/><rect x="0" y="4" width="2" height="1" fill="#000"/><rect x="2" y="4" width="1" height="1" fill="#fff"/><rect x="3" y="4" width="1" height="1" fill="#000"/><rect x="4" y="4" width="1" height="1" fill="#fff"/><rect x="5" y="4" width="3" height="1" fill="#000"/><rect x="8" y="4" width="2" height="1" fill="#fff"/><rect x="10" y="4" width="4" height="1" fill="#000"/><rect x="0" y="5" width="2" height="1" fill="#D0D0D0"/><rect x="2" y="5" width="4" height="1" fill="#000"/><rect x="6" y="5" width="2" height="1" fill="#86C886"/><rect x="8" y="5" width="4" height="1" fill="#000"/><rect x="1" y="6" width="3" height="1" fill="#D0D0D0"/><rect x="4" y="6" width="2" height="1" fill="#000"/><rect x="6" y="6" width="2" height="1" fill="#86C886"/><rect x="8" y="6" width="2" height="1" fill="#000"/><rect x="3" y="7" width="3" height="1" fill="#D0D0D0"/><rect x="6" y="7" width="2" height="1" fill="#000"/></svg>
<div class="t" style="left:219px;top:94px;;letter-spacing:-0.100px;transform:scaleX(0.9701);transform-origin:0 0">Vlastnosti základní desky</div>
<svg class="a" style="left:218px;top:111px" width="14" height="8" shape-rendering="crispEdges"><rect x="6" y="0" width="2" height="1" fill="#000"/><rect x="4" y="1" width="2" height="1" fill="#000"/><rect x="6" y="1" width="2" height="1" fill="#fff"/><rect x="8" y="1" width="2" height="1" fill="#000"/><rect x="2" y="2" width="2" height="1" fill="#000"/><rect x="4" y="2" width="2" height="1" fill="#fff"/><rect x="6" y="2" width="2" height="1" fill="#000"/><rect x="8" y="2" width="2" height="1" fill="#fff"/><rect x="10" y="2" width="2" height="1" fill="#000"/><rect x="0" y="3" width="6" height="1" fill="#000"/><rect x="6" y="3" width="2" height="1" fill="#fff"/><rect x="8" y="3" width="2" height="1" fill="#000"/><rect x="10" y="3" width="2" height="1" fill="#fff"/><rect x="12" y="3" width="2" height="1" fill="#000"/><rect x="0" y="4" width="2" height="1" fill="#000"/><rect x="2" y="4" width="1" height="1" fill="#fff"/><rect x="3" y="4" width="1" height="1" fill="#000"/><rect x="4" y="4" width="1" height="1" fill="#fff"/><rect x="5" y="4" width="3" height="1" fill="#000"/><rect x="8" y="4" width="2" height="1" fill="#fff"/><rect x="10" y="4" width="4" height="1" fill="#000"/><rect x="0" y="5" width="2" height="1" fill="#D0D0D0"/><rect x="2" y="5" width="4" height="1" fill="#000"/><rect x="6" y="5" width="2" height="1" fill="#86C886"/><rect x="8" y="5" width="4" height="1" fill="#000"/><rect x="1" y="6" width="3" height="1" fill="#D0D0D0"/><rect x="4" y="6" width="2" height="1" fill="#000"/><rect x="6" y="6" width="2" height="1" fill="#86C886"/><rect x="8" y="6" width="2" height="1" fill="#000"/><rect x="3" y="7" width="3" height="1" fill="#D0D0D0"/><rect x="6" y="7" width="2" height="1" fill="#000"/></svg>
<div class="t" style="left:235px;top:111px;;letter-spacing:-0.100px;transform:scaleX(0.9680);transform-origin:0 0">ID základní desky</div>
<div class="t" style="left:402px;top:111px;;letter-spacing:-0.100px;transform:scaleX(0.9935);transform-origin:0 0">05/04/2006-MS-7125-6A61FM49C-00</div>
<svg class="a" style="left:218px;top:128px" width="14" height="8" shape-rendering="crispEdges"><rect x="6" y="0" width="2" height="1" fill="#000"/><rect x="4" y="1" width="2" height="1" fill="#000"/><rect x="6" y="1" width="2" height="1" fill="#fff"/><rect x="8" y="1" width="2" height="1" fill="#000"/><rect x="2" y="2" width="2" height="1" fill="#000"/><rect x="4" y="2" width="2" height="1" fill="#fff"/><rect x="6" y="2" width="2" height="1" fill="#000"/><rect x="8" y="2" width="2" height="1" fill="#fff"/><rect x="10" y="2" width="2" height="1" fill="#000"/><rect x="0" y="3" width="6" height="1" fill="#000"/><rect x="6" y="3" width="2" height="1" fill="#fff"/><rect x="8" y="3" width="2" height="1" fill="#000"/><rect x="10" y="3" width="2" height="1" fill="#fff"/><rect x="12" y="3" width="2" height="1" fill="#000"/><rect x="0" y="4" width="2" height="1" fill="#000"/><rect x="2" y="4" width="1" height="1" fill="#fff"/><rect x="3" y="4" width="1" height="1" fill="#000"/><rect x="4" y="4" width="1" height="1" fill="#fff"/><rect x="5" y="4" width="3" height="1" fill="#000"/><rect x="8" y="4" width="2" height="1" fill="#fff"/><rect x="10" y="4" width="4" height="1" fill="#000"/><rect x="0" y="5" width="2" height="1" fill="#D0D0D0"/><rect x="2" y="5" width="4" height="1" fill="#000"/><rect x="6" y="5" width="2" height="1" fill="#86C886"/><rect x="8" y="5" width="4" height="1" fill="#000"/><rect x="1" y="6" width="3" height="1" fill="#D0D0D0"/><rect x="4" y="6" width="2" height="1" fill="#000"/><rect x="6" y="6" width="2" height="1" fill="#86C886"/><rect x="8" y="6" width="2" height="1" fill="#000"/><rect x="3" y="7" width="3" height="1" fill="#D0D0D0"/><rect x="6" y="7" width="2" height="1" fill="#000"/></svg>
<div class="t" style="left:235px;top:128px;;letter-spacing:-0.100px;transform:scaleX(0.9657);transform-origin:0 0">Název základní desky</div>
<div class="t" style="left:402px;top:128px;;letter-spacing:-0.100px;transform:scaleX(0.9604);transform-origin:0 0">MSI K8N Neo4 Series (MS-7125)</div>
<svg class="a" style="left:202px;top:162px" width="14" height="8" shape-rendering="crispEdges"><rect x="6" y="0" width="2" height="1" fill="#000"/><rect x="4" y="1" width="2" height="1" fill="#000"/><rect x="6" y="1" width="2" height="1" fill="#fff"/><rect x="8" y="1" width="2" height="1" fill="#000"/><rect x="2" y="2" width="2" height="1" fill="#000"/><rect x="4" y="2" width="2" height="1" fill="#fff"/><rect x="6" y="2" width="2" height="1" fill="#000"/><rect x="8" y="2" width="2" height="1" fill="#fff"/><rect x="10" y="2" width="2" height="1" fill="#000"/><rect x="0" y="3" width="6" height="1" fill="#000"/><rect x="6" y="3" width="2" height="1" fill="#fff"/><rect x="8" y="3" width="2" height="1" fill="#000"/><rect x="10" y="3" width="2" height="1" fill="#fff"/><rect x="12" y="3" width="2" height="1" fill="#000"/><rect x="0" y="4" width="2" height="1" fill="#000"/><rect x="2" y="4" width="1" height="1" fill="#fff"/><rect x="3" y="4" width="1" height="1" fill="#000"/><rect x="4" y="4" width="1" height="1" fill="#fff"/><rect x="5" y="4" width="3" height="1" fill="#000"/><rect x="8" y="4" width="2" height="1" fill="#fff"/><rect x="10" y="4" width="4" height="1" fill="#000"/><rect x="0" y="5" width="2" height="1" fill="#D0D0D0"/><rect x="2" y="5" width="4" height="1" fill="#000"/><rect x="6" y="5" width="2" height="1" fill="#86C886"/><rect x="8" y="5" width="4" height="1" fill="#000"/><rect x="1" y="6" width="3" height="1" fill="#D0D0D0"/><rect x="4" y="6" width="2" height="1" fill="#000"/><rect x="6" y="6" width="2" height="1" fill="#86C886"/><rect x="8" y="6" width="2" height="1" fill="#000"/><rect x="3" y="7" width="3" height="1" fill="#D0D0D0"/><rect x="6" y="7" width="2" height="1" fill="#000"/></svg>
<div class="t" style="left:219px;top:162px;;letter-spacing:-0.100px;transform:scaleX(0.9387);transform-origin:0 0">Vlastnosti FSB</div>
<svg class="a" style="left:218px;top:179px" width="14" height="8" shape-rendering="crispEdges"><rect x="6" y="0" width="2" height="1" fill="#000"/><rect x="4" y="1" width="2" height="1" fill="#000"/><rect x="6" y="1" width="2" height="1" fill="#fff"/><rect x="8" y="1" width="2" height="1" fill="#000"/><rect x="2" y="2" width="2" height="1" fill="#000"/><rect x="4" y="2" width="2" height="1" fill="#fff"/><rect x="6" y="2" width="2" height="1" fill="#000"/><rect x="8" y="2" width="2" height="1" fill="#fff"/><rect x="10" y="2" width="2" height="1" fill="#000"/><rect x="0" y="3" width="6" height="1" fill="#000"/><rect x="6" y="3" width="2" height="1" fill="#fff"/><rect x="8" y="3" width="2" height="1" fill="#000"/><rect x="10" y="3" width="2" height="1" fill="#fff"/><rect x="12" y="3" width="2" height="1" fill="#000"/><rect x="0" y="4" width="2" height="1" fill="#000"/><rect x="2" y="4" width="1" height="1" fill="#fff"/><rect x="3" y="4" width="1" height="1" fill="#000"/><rect x="4" y="4" width="1" height="1" fill="#fff"/><rect x="5" y="4" width="3" height="1" fill="#000"/><rect x="8" y="4" width="2" height="1" fill="#fff"/><rect x="10" y="4" width="4" height="1" fill="#000"/><rect x="0" y="5" width="2" height="1" fill="#D0D0D0"/><rect x="2" y="5" width="4" height="1" fill="#000"/><rect x="6" y="5" width="2" height="1" fill="#86C886"/><rect x="8" y="5" width="4" height="1" fill="#000"/><rect x="1" y="6" width="3" height="1" fill="#D0D0D0"/><rect x="4" y="6" width="2" height="1" fill="#000"/><rect x="6" y="6" width="2" height="1" fill="#86C886"/><rect x="8" y="6" width="2" height="1" fill="#000"/><rect x="3" y="7" width="3" height="1" fill="#D0D0D0"/><rect x="6" y="7" width="2" height="1" fill="#000"/></svg>
<div class="t" style="left:235px;top:179px;;letter-spacing:-0.100px;transform:scaleX(0.9874);transform-origin:0 0">Typ sběrnice</div>
<div class="t" style="left:402px;top:179px;;letter-spacing:-0.100px;transform:scaleX(0.9379);transform-origin:0 0">AMD Hammer</div>
<svg class="a" style="left:218px;top:196px" width="14" height="8" shape-rendering="crispEdges"><rect x="6" y="0" width="2" height="1" fill="#000"/><rect x="4" y="1" width="2" height="1" fill="#000"/><rect x="6" y="1" width="2" height="1" fill="#fff"/><rect x="8" y="1" width="2" height="1" fill="#000"/><rect x="2" y="2" width="2" height="1" fill="#000"/><rect x="4" y="2" width="2" height="1" fill="#fff"/><rect x="6" y="2" width="2" height="1" fill="#000"/><rect x="8" y="2" width="2" height="1" fill="#fff"/><rect x="10" y="2" width="2" height="1" fill="#000"/><rect x="0" y="3" width="6" height="1" fill="#000"/><rect x="6" y="3" width="2" height="1" fill="#fff"/><rect x="8" y="3" width="2" height="1" fill="#000"/><rect x="10" y="3" width="2" height="1" fill="#fff"/><rect x="12" y="3" width="2" height="1" fill="#000"/><rect x="0" y="4" width="2" height="1" fill="#000"/><rect x="2" y="4" width="1" height="1" fill="#fff"/><rect x="3" y="4" width="1" height="1" fill="#000"/><rect x="4" y="4" width="1" height="1" fill="#fff"/><rect x="5" y="4" width="3" height="1" fill="#000"/><rect x="8" y="4" width="2" height="1" fill="#fff"/><rect x="10" y="4" width="4" height="1" fill="#000"/><rect x="0" y="5" width="2" height="1" fill="#D0D0D0"/><rect x="2" y="5" width="4" height="1" fill="#000"/><rect x="6" y="5" width="2" height="1" fill="#86C886"/><rect x="8" y="5" width="4" height="1" fill="#000"/><rect x="1" y="6" width="3" height="1" fill="#D0D0D0"/><rect x="4" y="6" width="2" height="1" fill="#000"/><rect x="6" y="6" width="2" height="1" fill="#86C886"/><rect x="8" y="6" width="2" height="1" fill="#000"/><rect x="3" y="7" width="3" height="1" fill="#D0D0D0"/><rect x="6" y="7" width="2" height="1" fill="#000"/></svg>
<div class="t" style="left:235px;top:196px;;letter-spacing:-0.046px">Skutečný takt</div>
<div class="t" style="left:402px;top:196px;;letter-spacing:-0.100px;transform:scaleX(0.9555);transform-origin:0 0">200 MHz</div>
<svg class="a" style="left:218px;top:213px" width="14" height="8" shape-rendering="crispEdges"><rect x="6" y="0" width="2" height="1" fill="#000"/><rect x="4" y="1" width="2" height="1" fill="#000"/><rect x="6" y="1" width="2" height="1" fill="#fff"/><rect x="8" y="1" width="2" height="1" fill="#000"/><rect x="2" y="2" width="2" height="1" fill="#000"/><rect x="4" y="2" width="2" height="1" fill="#fff"/><rect x="6" y="2" width="2" height="1" fill="#000"/><rect x="8" y="2" width="2" height="1" fill="#fff"/><rect x="10" y="2" width="2" height="1" fill="#000"/><rect x="0" y="3" width="6" height="1" fill="#000"/><rect x="6" y="3" width="2" height="1" fill="#fff"/><rect x="8" y="3" width="2" height="1" fill="#000"/><rect x="10" y="3" width="2" height="1" fill="#fff"/><rect x="12" y="3" width="2" height="1" fill="#000"/><rect x="0" y="4" width="2" height="1" fill="#000"/><rect x="2" y="4" width="1" height="1" fill="#fff"/><rect x="3" y="4" width="1" height="1" fill="#000"/><rect x="4" y="4" width="1" height="1" fill="#fff"/><rect x="5" y="4" width="3" height="1" fill="#000"/><rect x="8" y="4" width="2" height="1" fill="#fff"/><rect x="10" y="4" width="4" height="1" fill="#000"/><rect x="0" y="5" width="2" height="1" fill="#D0D0D0"/><rect x="2" y="5" width="4" height="1" fill="#000"/><rect x="6" y="5" width="2" height="1" fill="#86C886"/><rect x="8" y="5" width="4" height="1" fill="#000"/><rect x="1" y="6" width="3" height="1" fill="#D0D0D0"/><rect x="4" y="6" width="2" height="1" fill="#000"/><rect x="6" y="6" width="2" height="1" fill="#86C886"/><rect x="8" y="6" width="2" height="1" fill="#000"/><rect x="3" y="7" width="3" height="1" fill="#D0D0D0"/><rect x="6" y="7" width="2" height="1" fill="#000"/></svg>
<div class="t" style="left:235px;top:213px;;letter-spacing:-0.077px">Efektivní taktování</div>
<div class="t" style="left:402px;top:213px;;letter-spacing:-0.100px;transform:scaleX(0.9555);transform-origin:0 0">200 MHz</div>
<svg class="a" style="left:217px;top:229px" width="16" height="12" shape-rendering="crispEdges"><rect x="7" y="0" width="2" height="1" fill="#000"/><rect x="5" y="1" width="2" height="1" fill="#000"/><rect x="7" y="1" width="2" height="1" fill="#52526C"/><rect x="9" y="1" width="2" height="1" fill="#000"/><rect x="3" y="2" width="2" height="1" fill="#000"/><rect x="5" y="2" width="2" height="1" fill="#52526C"/><rect x="7" y="2" width="2" height="1" fill="#080818"/><rect x="9" y="2" width="2" height="1" fill="#52526C"/><rect x="11" y="2" width="2" height="1" fill="#000"/><rect x="1" y="3" width="2" height="1" fill="#000"/><rect x="3" y="3" width="3" height="1" fill="#52526C"/><rect x="6" y="3" width="4" height="1" fill="#080818"/><rect x="10" y="3" width="3" height="1" fill="#52526C"/><rect x="13" y="3" width="2" height="1" fill="#000"/><rect x="0" y="4" width="1" height="1" fill="#000"/><rect x="1" y="4" width="4" height="1" fill="#52526C"/><rect x="5" y="4" width="6" height="1" fill="#080818"/><rect x="11" y="4" width="4" height="1" fill="#52526C"/><rect x="15" y="4" width="1" height="1" fill="#000"/><rect x="0" y="5" width="1" height="1" fill="#000"/><rect x="1" y="5" width="1" height="1" fill="#C0C0D8"/><rect x="2" y="5" width="5" height="1" fill="#52526C"/><rect x="7" y="5" width="2" height="1" fill="#080818"/><rect x="9" y="5" width="5" height="1" fill="#52526C"/><rect x="14" y="5" width="1" height="1" fill="#34344A"/><rect x="15" y="5" width="1" height="1" fill="#000"/><rect x="0" y="6" width="1" height="1" fill="#000"/><rect x="1" y="6" width="1" height="1" fill="#52526C"/><rect x="2" y="6" width="1" height="1" fill="#C0C0D8"/><rect x="3" y="6" width="10" height="1" fill="#52526C"/><rect x="13" y="6" width="2" height="1" fill="#34344A"/><rect x="15" y="6" width="1" height="1" fill="#000"/><rect x="0" y="7" width="2" height="1" fill="#000"/><rect x="2" y="7" width="1" height="1" fill="#52526C"/><rect x="3" y="7" width="1" height="1" fill="#C0C0D8"/><rect x="4" y="7" width="8" height="1" fill="#52526C"/><rect x="12" y="7" width="2" height="1" fill="#34344A"/><rect x="14" y="7" width="2" height="1" fill="#000"/><rect x="1" y="8" width="3" height="1" fill="#000"/><rect x="4" y="8" width="3" height="1" fill="#52526C"/><rect x="7" y="8" width="1" height="1" fill="#C0C0D8"/><rect x="8" y="8" width="3" height="1" fill="#52526C"/><rect x="11" y="8" width="1" height="1" fill="#34344A"/><rect x="12" y="8" width="3" height="1" fill="#000"/><rect x="3" y="9" width="3" height="1" fill="#000"/><rect x="6" y="9" width="3" height="1" fill="#52526C"/><rect x="9" y="9" width="1" height="1" fill="#34344A"/><rect x="10" y="9" width="3" height="1" fill="#000"/><rect x="5" y="10" width="6" height="1" fill="#000"/><rect x="7" y="11" width="2" height="1" fill="#000"/></svg>
<div class="t" style="left:235px;top:230px;;letter-spacing:0.055px">Taktování hypertransportu</div>
<div class="t" style="left:402px;top:230px;;letter-spacing:-0.100px;transform:scaleX(0.9607);transform-origin:0 0">1000 MHz</div>
<svg class="a" style="left:201px;top:265px" width="16" height="8" shape-rendering="crispEdges"><rect x="0" y="0" width="15" height="1" fill="#2A6A2A"/><rect x="15" y="0" width="1" height="1" fill="#000"/><rect x="0" y="1" width="1" height="1" fill="#2A6A2A"/><rect x="1" y="1" width="13" height="1" fill="#3A963A"/><rect x="14" y="1" width="1" height="1" fill="#2A6A2A"/><rect x="15" y="1" width="1" height="1" fill="#000"/><rect x="0" y="2" width="1" height="1" fill="#2A6A2A"/><rect x="1" y="2" width="2" height="1" fill="#3A963A"/><rect x="3" y="2" width="1" height="1" fill="#D8FFD0"/><rect x="4" y="2" width="1" height="1" fill="#000"/><rect x="5" y="2" width="1" height="1" fill="#3A963A"/><rect x="6" y="2" width="1" height="1" fill="#D8FFD0"/><rect x="7" y="2" width="1" height="1" fill="#000"/><rect x="8" y="2" width="1" height="1" fill="#3A963A"/><rect x="9" y="2" width="1" height="1" fill="#D8FFD0"/><rect x="10" y="2" width="1" height="1" fill="#000"/><rect x="11" y="2" width="1" height="1" fill="#3A963A"/><rect x="12" y="2" width="1" height="1" fill="#D8FFD0"/><rect x="13" y="2" width="1" height="1" fill="#000"/><rect x="14" y="2" width="1" height="1" fill="#3A963A"/><rect x="15" y="2" width="1" height="1" fill="#000"/><rect x="0" y="3" width="1" height="1" fill="#2A6A2A"/><rect x="1" y="3" width="2" height="1" fill="#3A963A"/><rect x="3" y="3" width="1" height="1" fill="#D8FFD0"/><rect x="4" y="3" width="1" height="1" fill="#000"/><rect x="5" y="3" width="1" height="1" fill="#3A963A"/><rect x="6" y="3" width="1" height="1" fill="#D8FFD0"/><rect x="7" y="3" width="1" height="1" fill="#000"/><rect x="8" y="3" width="1" height="1" fill="#3A963A"/><rect x="9" y="3" width="1" height="1" fill="#D8FFD0"/><rect x="10" y="3" width="1" height="1" fill="#000"/><rect x="11" y="3" width="1" height="1" fill="#3A963A"/><rect x="12" y="3" width="1" height="1" fill="#D8FFD0"/><rect x="13" y="3" width="1" height="1" fill="#000"/><rect x="14" y="3" width="1" height="1" fill="#3A963A"/><rect x="15" y="3" width="1" height="1" fill="#000"/><rect x="0" y="4" width="1" height="1" fill="#2A6A2A"/><rect x="1" y="4" width="2" height="1" fill="#3A963A"/><rect x="3" y="4" width="2" height="1" fill="#000"/><rect x="5" y="4" width="1" height="1" fill="#3A963A"/><rect x="6" y="4" width="2" height="1" fill="#000"/><rect x="8" y="4" width="1" height="1" fill="#3A963A"/><rect x="9" y="4" width="2" height="1" fill="#000"/><rect x="11" y="4" width="1" height="1" fill="#3A963A"/><rect x="12" y="4" width="2" height="1" fill="#000"/><rect x="14" y="4" width="1" height="1" fill="#3A963A"/><rect x="15" y="4" width="1" height="1" fill="#000"/><rect x="0" y="5" width="1" height="1" fill="#000"/><rect x="1" y="5" width="13" height="1" fill="#3A963A"/><rect x="14" y="5" width="1" height="1" fill="#2A6A2A"/><rect x="15" y="5" width="1" height="1" fill="#000"/><rect x="1" y="6" width="1" height="1" fill="#3A963A"/><rect x="2" y="6" width="1" height="1" fill="#F0F0A0"/><rect x="3" y="6" width="1" height="1" fill="#3A963A"/><rect x="4" y="6" width="1" height="1" fill="#F0F0A0"/><rect x="5" y="6" width="1" height="1" fill="#3A963A"/><rect x="6" y="6" width="1" height="1" fill="#F0F0A0"/><rect x="7" y="6" width="1" height="1" fill="#000"/><rect x="8" y="6" width="1" height="1" fill="#F0F0A0"/><rect x="9" y="6" width="1" height="1" fill="#3A963A"/><rect x="10" y="6" width="1" height="1" fill="#F0F0A0"/><rect x="11" y="6" width="1" height="1" fill="#3A963A"/><rect x="12" y="6" width="1" height="1" fill="#F0F0A0"/><rect x="13" y="6" width="1" height="1" fill="#3A963A"/><rect x="14" y="6" width="1" height="1" fill="#2A6A2A"/><rect x="15" y="6" width="1" height="1" fill="#000"/><rect x="1" y="7" width="6" height="1" fill="#000"/><rect x="9" y="7" width="7" height="1" fill="#000"/></svg>
<div class="t" style="left:219px;top:264px;;letter-spacing:-0.100px;transform:scaleX(0.9932);transform-origin:0 0">Vlastnosti paměťové sběrnice</div>
<svg class="a" style="left:217px;top:282px" width="16" height="8" shape-rendering="crispEdges"><rect x="0" y="0" width="15" height="1" fill="#2A6A2A"/><rect x="15" y="0" width="1" height="1" fill="#000"/><rect x="0" y="1" width="1" height="1" fill="#2A6A2A"/><rect x="1" y="1" width="13" height="1" fill="#3A963A"/><rect x="14" y="1" width="1" height="1" fill="#2A6A2A"/><rect x="15" y="1" width="1" height="1" fill="#000"/><rect x="0" y="2" width="1" height="1" fill="#2A6A2A"/><rect x="1" y="2" width="2" height="1" fill="#3A963A"/><rect x="3" y="2" width="1" height="1" fill="#D8FFD0"/><rect x="4" y="2" width="1" height="1" fill="#000"/><rect x="5" y="2" width="1" height="1" fill="#3A963A"/><rect x="6" y="2" width="1" height="1" fill="#D8FFD0"/><rect x="7" y="2" width="1" height="1" fill="#000"/><rect x="8" y="2" width="1" height="1" fill="#3A963A"/><rect x="9" y="2" width="1" height="1" fill="#D8FFD0"/><rect x="10" y="2" width="1" height="1" fill="#000"/><rect x="11" y="2" width="1" height="1" fill="#3A963A"/><rect x="12" y="2" width="1" height="1" fill="#D8FFD0"/><rect x="13" y="2" width="1" height="1" fill="#000"/><rect x="14" y="2" width="1" height="1" fill="#3A963A"/><rect x="15" y="2" width="1" height="1" fill="#000"/><rect x="0" y="3" width="1" height="1" fill="#2A6A2A"/><rect x="1" y="3" width="2" height="1" fill="#3A963A"/><rect x="3" y="3" width="1" height="1" fill="#D8FFD0"/><rect x="4" y="3" width="1" height="1" fill="#000"/><rect x="5" y="3" width="1" height="1" fill="#3A963A"/><rect x="6" y="3" width="1" height="1" fill="#D8FFD0"/><rect x="7" y="3" width="1" height="1" fill="#000"/><rect x="8" y="3" width="1" height="1" fill="#3A963A"/><rect x="9" y="3" width="1" height="1" fill="#D8FFD0"/><rect x="10" y="3" width="1" height="1" fill="#000"/><rect x="11" y="3" width="1" height="1" fill="#3A963A"/><rect x="12" y="3" width="1" height="1" fill="#D8FFD0"/><rect x="13" y="3" width="1" height="1" fill="#000"/><rect x="14" y="3" width="1" height="1" fill="#3A963A"/><rect x="15" y="3" width="1" height="1" fill="#000"/><rect x="0" y="4" width="1" height="1" fill="#2A6A2A"/><rect x="1" y="4" width="2" height="1" fill="#3A963A"/><rect x="3" y="4" width="2" height="1" fill="#000"/><rect x="5" y="4" width="1" height="1" fill="#3A963A"/><rect x="6" y="4" width="2" height="1" fill="#000"/><rect x="8" y="4" width="1" height="1" fill="#3A963A"/><rect x="9" y="4" width="2" height="1" fill="#000"/><rect x="11" y="4" width="1" height="1" fill="#3A963A"/><rect x="12" y="4" width="2" height="1" fill="#000"/><rect x="14" y="4" width="1" height="1" fill="#3A963A"/><rect x="15" y="4" width="1" height="1" fill="#000"/><rect x="0" y="5" width="1" height="1" fill="#000"/><rect x="1" y="5" width="13" height="1" fill="#3A963A"/><rect x="14" y="5" width="1" height="1" fill="#2A6A2A"/><rect x="15" y="5" width="1" height="1" fill="#000"/><rect x="1" y="6" width="1" height="1" fill="#3A963A"/><rect x="2" y="6" width="1" height="1" fill="#F0F0A0"/><rect x="3" y="6" width="1" height="1" fill="#3A963A"/><rect x="4" y="6" width="1" height="1" fill="#F0F0A0"/><rect x="5" y="6" width="1" height="1" fill="#3A963A"/><rect x="6" y="6" width="1" height="1" fill="#F0F0A0"/><rect x="7" y="6" width="1" height="1" fill="#000"/><rect x="8" y="6" width="1" height="1" fill="#F0F0A0"/><rect x="9" y="6" width="1" height="1" fill="#3A963A"/><rect x="10" y="6" width="1" height="1" fill="#F0F0A0"/><rect x="11" y="6" width="1" height="1" fill="#3A963A"/><rect x="12" y="6" width="1" height="1" fill="#F0F0A0"/><rect x="13" y="6" width="1" height="1" fill="#3A963A"/><rect x="14" y="6" width="1" height="1" fill="#2A6A2A"/><rect x="15" y="6" width="1" height="1" fill="#000"/><rect x="1" y="7" width="6" height="1" fill="#000"/><rect x="9" y="7" width="7" height="1" fill="#000"/></svg>
<div class="t" style="left:235px;top:281px;;letter-spacing:-0.100px;transform:scaleX(0.9874);transform-origin:0 0">Typ sběrnice</div>
<div class="t" style="left:402px;top:281px;;letter-spacing:-0.100px;transform:scaleX(0.9039);transform-origin:0 0">DDR SDRAM</div>
<svg class="a" style="left:217px;top:299px" width="16" height="8" shape-rendering="crispEdges"><rect x="0" y="0" width="15" height="1" fill="#2A6A2A"/><rect x="15" y="0" width="1" height="1" fill="#000"/><rect x="0" y="1" width="1" height="1" fill="#2A6A2A"/><rect x="1" y="1" width="13" height="1" fill="#3A963A"/><rect x="14" y="1" width="1" height="1" fill="#2A6A2A"/><rect x="15" y="1" width="1" height="1" fill="#000"/><rect x="0" y="2" width="1" height="1" fill="#2A6A2A"/><rect x="1" y="2" width="2" height="1" fill="#3A963A"/><rect x="3" y="2" width="1" height="1" fill="#D8FFD0"/><rect x="4" y="2" width="1" height="1" fill="#000"/><rect x="5" y="2" width="1" height="1" fill="#3A963A"/><rect x="6" y="2" width="1" height="1" fill="#D8FFD0"/><rect x="7" y="2" width="1" height="1" fill="#000"/><rect x="8" y="2" width="1" height="1" fill="#3A963A"/><rect x="9" y="2" width="1" height="1" fill="#D8FFD0"/><rect x="10" y="2" width="1" height="1" fill="#000"/><rect x="11" y="2" width="1" height="1" fill="#3A963A"/><rect x="12" y="2" width="1" height="1" fill="#D8FFD0"/><rect x="13" y="2" width="1" height="1" fill="#000"/><rect x="14" y="2" width="1" height="1" fill="#3A963A"/><rect x="15" y="2" width="1" height="1" fill="#000"/><rect x="0" y="3" width="1" height="1" fill="#2A6A2A"/><rect x="1" y="3" width="2" height="1" fill="#3A963A"/><rect x="3" y="3" width="1" height="1" fill="#D8FFD0"/><rect x="4" y="3" width="1" height="1" fill="#000"/><rect x="5" y="3" width="1" height="1" fill="#3A963A"/><rect x="6" y="3" width="1" height="1" fill="#D8FFD0"/><rect x="7" y="3" width="1" height="1" fill="#000"/><rect x="8" y="3" width="1" height="1" fill="#3A963A"/><rect x="9" y="3" width="1" height="1" fill="#D8FFD0"/><rect x="10" y="3" width="1" height="1" fill="#000"/><rect x="11" y="3" width="1" height="1" fill="#3A963A"/><rect x="12" y="3" width="1" height="1" fill="#D8FFD0"/><rect x="13" y="3" width="1" height="1" fill="#000"/><rect x="14" y="3" width="1" height="1" fill="#3A963A"/><rect x="15" y="3" width="1" height="1" fill="#000"/><rect x="0" y="4" width="1" height="1" fill="#2A6A2A"/><rect x="1" y="4" width="2" height="1" fill="#3A963A"/><rect x="3" y="4" width="2" height="1" fill="#000"/><rect x="5" y="4" width="1" height="1" fill="#3A963A"/><rect x="6" y="4" width="2" height="1" fill="#000"/><rect x="8" y="4" width="1" height="1" fill="#3A963A"/><rect x="9" y="4" width="2" height="1" fill="#000"/><rect x="11" y="4" width="1" height="1" fill="#3A963A"/><rect x="12" y="4" width="2" height="1" fill="#000"/><rect x="14" y="4" width="1" height="1" fill="#3A963A"/><rect x="15" y="4" width="1" height="1" fill="#000"/><rect x="0" y="5" width="1" height="1" fill="#000"/><rect x="1" y="5" width="13" height="1" fill="#3A963A"/><rect x="14" y="5" width="1" height="1" fill="#2A6A2A"/><rect x="15" y="5" width="1" height="1" fill="#000"/><rect x="1" y="6" width="1" height="1" fill="#3A963A"/><rect x="2" y="6" width="1" height="1" fill="#F0F0A0"/><rect x="3" y="6" width="1" height="1" fill="#3A963A"/><rect x="4" y="6" width="1" height="1" fill="#F0F0A0"/><rect x="5" y="6" width="1" height="1" fill="#3A963A"/><rect x="6" y="6" width="1" height="1" fill="#F0F0A0"/><rect x="7" y="6" width="1" height="1" fill="#000"/><rect x="8" y="6" width="1" height="1" fill="#F0F0A0"/><rect x="9" y="6" width="1" height="1" fill="#3A963A"/><rect x="10" y="6" width="1" height="1" fill="#F0F0A0"/><rect x="11" y="6" width="1" height="1" fill="#3A963A"/><rect x="12" y="6" width="1" height="1" fill="#F0F0A0"/><rect x="13" y="6" width="1" height="1" fill="#3A963A"/><rect x="14" y="6" width="1" height="1" fill="#2A6A2A"/><rect x="15" y="6" width="1" height="1" fill="#000"/><rect x="1" y="7" width="6" height="1" fill="#000"/><rect x="9" y="7" width="7" height="1" fill="#000"/></svg>
<div class="t" style="left:235px;top:298px;;letter-spacing:-0.100px;transform:scaleX(0.9491);transform-origin:0 0">Šířka sběrnice</div>
<div class="t" style="left:402px;top:298px;;letter-spacing:0.116px">64 bit</div>
<svg class="a" style="left:217px;top:316px" width="16" height="8" shape-rendering="crispEdges"><rect x="0" y="0" width="15" height="1" fill="#2A6A2A"/><rect x="15" y="0" width="1" height="1" fill="#000"/><rect x="0" y="1" width="1" height="1" fill="#2A6A2A"/><rect x="1" y="1" width="13" height="1" fill="#3A963A"/><rect x="14" y="1" width="1" height="1" fill="#2A6A2A"/><rect x="15" y="1" width="1" height="1" fill="#000"/><rect x="0" y="2" width="1" height="1" fill="#2A6A2A"/><rect x="1" y="2" width="2" height="1" fill="#3A963A"/><rect x="3" y="2" width="1" height="1" fill="#D8FFD0"/><rect x="4" y="2" width="1" height="1" fill="#000"/><rect x="5" y="2" width="1" height="1" fill="#3A963A"/><rect x="6" y="2" width="1" height="1" fill="#D8FFD0"/><rect x="7" y="2" width="1" height="1" fill="#000"/><rect x="8" y="2" width="1" height="1" fill="#3A963A"/><rect x="9" y="2" width="1" height="1" fill="#D8FFD0"/><rect x="10" y="2" width="1" height="1" fill="#000"/><rect x="11" y="2" width="1" height="1" fill="#3A963A"/><rect x="12" y="2" width="1" height="1" fill="#D8FFD0"/><rect x="13" y="2" width="1" height="1" fill="#000"/><rect x="14" y="2" width="1" height="1" fill="#3A963A"/><rect x="15" y="2" width="1" height="1" fill="#000"/><rect x="0" y="3" width="1" height="1" fill="#2A6A2A"/><rect x="1" y="3" width="2" height="1" fill="#3A963A"/><rect x="3" y="3" width="1" height="1" fill="#D8FFD0"/><rect x="4" y="3" width="1" height="1" fill="#000"/><rect x="5" y="3" width="1" height="1" fill="#3A963A"/><rect x="6" y="3" width="1" height="1" fill="#D8FFD0"/><rect x="7" y="3" width="1" height="1" fill="#000"/><rect x="8" y="3" width="1" height="1" fill="#3A963A"/><rect x="9" y="3" width="1" height="1" fill="#D8FFD0"/><rect x="10" y="3" width="1" height="1" fill="#000"/><rect x="11" y="3" width="1" height="1" fill="#3A963A"/><rect x="12" y="3" width="1" height="1" fill="#D8FFD0"/><rect x="13" y="3" width="1" height="1" fill="#000"/><rect x="14" y="3" width="1" height="1" fill="#3A963A"/><rect x="15" y="3" width="1" height="1" fill="#000"/><rect x="0" y="4" width="1" height="1" fill="#2A6A2A"/><rect x="1" y="4" width="2" height="1" fill="#3A963A"/><rect x="3" y="4" width="2" height="1" fill="#000"/><rect x="5" y="4" width="1" height="1" fill="#3A963A"/><rect x="6" y="4" width="2" height="1" fill="#000"/><rect x="8" y="4" width="1" height="1" fill="#3A963A"/><rect x="9" y="4" width="2" height="1" fill="#000"/><rect x="11" y="4" width="1" height="1" fill="#3A963A"/><rect x="12" y="4" width="2" height="1" fill="#000"/><rect x="14" y="4" width="1" height="1" fill="#3A963A"/><rect x="15" y="4" width="1" height="1" fill="#000"/><rect x="0" y="5" width="1" height="1" fill="#000"/><rect x="1" y="5" width="13" height="1" fill="#3A963A"/><rect x="14" y="5" width="1" height="1" fill="#2A6A2A"/><rect x="15" y="5" width="1" height="1" fill="#000"/><rect x="1" y="6" width="1" height="1" fill="#3A963A"/><rect x="2" y="6" width="1" height="1" fill="#F0F0A0"/><rect x="3" y="6" width="1" height="1" fill="#3A963A"/><rect x="4" y="6" width="1" height="1" fill="#F0F0A0"/><rect x="5" y="6" width="1" height="1" fill="#3A963A"/><rect x="6" y="6" width="1" height="1" fill="#F0F0A0"/><rect x="7" y="6" width="1" height="1" fill="#000"/><rect x="8" y="6" width="1" height="1" fill="#F0F0A0"/><rect x="9" y="6" width="1" height="1" fill="#3A963A"/><rect x="10" y="6" width="1" height="1" fill="#F0F0A0"/><rect x="11" y="6" width="1" height="1" fill="#3A963A"/><rect x="12" y="6" width="1" height="1" fill="#F0F0A0"/><rect x="13" y="6" width="1" height="1" fill="#3A963A"/><rect x="14" y="6" width="1" height="1" fill="#2A6A2A"/><rect x="15" y="6" width="1" height="1" fill="#000"/><rect x="1" y="7" width="6" height="1" fill="#000"/><rect x="9" y="7" width="7" height="1" fill="#000"/></svg>
<div class="t" style="left:235px;top:315px;;letter-spacing:-0.046px">Skutečný takt</div>
<div class="t" style="left:402px;top:315px;;letter-spacing:-0.100px;transform:scaleX(0.9541);transform-origin:0 0">201 MHz (DDR)</div>
<svg class="a" style="left:217px;top:333px" width="16" height="8" shape-rendering="crispEdges"><rect x="0" y="0" width="15" height="1" fill="#2A6A2A"/><rect x="15" y="0" width="1" height="1" fill="#000"/><rect x="0" y="1" width="1" height="1" fill="#2A6A2A"/><rect x="1" y="1" width="13" height="1" fill="#3A963A"/><rect x="14" y="1" width="1" height="1" fill="#2A6A2A"/><rect x="15" y="1" width="1" height="1" fill="#000"/><rect x="0" y="2" width="1" height="1" fill="#2A6A2A"/><rect x="1" y="2" width="2" height="1" fill="#3A963A"/><rect x="3" y="2" width="1" height="1" fill="#D8FFD0"/><rect x="4" y="2" width="1" height="1" fill="#000"/><rect x="5" y="2" width="1" height="1" fill="#3A963A"/><rect x="6" y="2" width="1" height="1" fill="#D8FFD0"/><rect x="7" y="2" width="1" height="1" fill="#000"/><rect x="8" y="2" width="1" height="1" fill="#3A963A"/><rect x="9" y="2" width="1" height="1" fill="#D8FFD0"/><rect x="10" y="2" width="1" height="1" fill="#000"/><rect x="11" y="2" width="1" height="1" fill="#3A963A"/><rect x="12" y="2" width="1" height="1" fill="#D8FFD0"/><rect x="13" y="2" width="1" height="1" fill="#000"/><rect x="14" y="2" width="1" height="1" fill="#3A963A"/><rect x="15" y="2" width="1" height="1" fill="#000"/><rect x="0" y="3" width="1" height="1" fill="#2A6A2A"/><rect x="1" y="3" width="2" height="1" fill="#3A963A"/><rect x="3" y="3" width="1" height="1" fill="#D8FFD0"/><rect x="4" y="3" width="1" height="1" fill="#000"/><rect x="5" y="3" width="1" height="1" fill="#3A963A"/><rect x="6" y="3" width="1" height="1" fill="#D8FFD0"/><rect x="7" y="3" width="1" height="1" fill="#000"/><rect x="8" y="3" width="1" height="1" fill="#3A963A"/><rect x="9" y="3" width="1" height="1" fill="#D8FFD0"/><rect x="10" y="3" width="1" height="1" fill="#000"/><rect x="11" y="3" width="1" height="1" fill="#3A963A"/><rect x="12" y="3" width="1" height="1" fill="#D8FFD0"/><rect x="13" y="3" width="1" height="1" fill="#000"/><rect x="14" y="3" width="1" height="1" fill="#3A963A"/><rect x="15" y="3" width="1" height="1" fill="#000"/><rect x="0" y="4" width="1" height="1" fill="#2A6A2A"/><rect x="1" y="4" width="2" height="1" fill="#3A963A"/><rect x="3" y="4" width="2" height="1" fill="#000"/><rect x="5" y="4" width="1" height="1" fill="#3A963A"/><rect x="6" y="4" width="2" height="1" fill="#000"/><rect x="8" y="4" width="1" height="1" fill="#3A963A"/><rect x="9" y="4" width="2" height="1" fill="#000"/><rect x="11" y="4" width="1" height="1" fill="#3A963A"/><rect x="12" y="4" width="2" height="1" fill="#000"/><rect x="14" y="4" width="1" height="1" fill="#3A963A"/><rect x="15" y="4" width="1" height="1" fill="#000"/><rect x="0" y="5" width="1" height="1" fill="#000"/><rect x="1" y="5" width="13" height="1" fill="#3A963A"/><rect x="14" y="5" width="1" height="1" fill="#2A6A2A"/><rect x="15" y="5" width="1" height="1" fill="#000"/><rect x="1" y="6" width="1" height="1" fill="#3A963A"/><rect x="2" y="6" width="1" height="1" fill="#F0F0A0"/><rect x="3" y="6" width="1" height="1" fill="#3A963A"/><rect x="4" y="6" width="1" height="1" fill="#F0F0A0"/><rect x="5" y="6" width="1" height="1" fill="#3A963A"/><rect x="6" y="6" width="1" height="1" fill="#F0F0A0"/><rect x="7" y="6" width="1" height="1" fill="#000"/><rect x="8" y="6" width="1" height="1" fill="#F0F0A0"/><rect x="9" y="6" width="1" height="1" fill="#3A963A"/><rect x="10" y="6" width="1" height="1" fill="#F0F0A0"/><rect x="11" y="6" width="1" height="1" fill="#3A963A"/><rect x="12" y="6" width="1" height="1" fill="#F0F0A0"/><rect x="13" y="6" width="1" height="1" fill="#3A963A"/><rect x="14" y="6" width="1" height="1" fill="#2A6A2A"/><rect x="15" y="6" width="1" height="1" fill="#000"/><rect x="1" y="7" width="6" height="1" fill="#000"/><rect x="9" y="7" width="7" height="1" fill="#000"/></svg>
<div class="t" style="left:235px;top:332px;;letter-spacing:-0.077px">Efektivní taktování</div>
<div class="t" style="left:402px;top:332px;;letter-spacing:-0.100px;transform:scaleX(0.9555);transform-origin:0 0">402 MHz</div>
<svg class="a" style="left:217px;top:350px" width="16" height="8" shape-rendering="crispEdges"><rect x="0" y="0" width="15" height="1" fill="#2A6A2A"/><rect x="15" y="0" width="1" height="1" fill="#000"/><rect x="0" y="1" width="1" height="1" fill="#2A6A2A"/><rect x="1" y="1" width="13" height="1" fill="#3A963A"/><rect x="14" y="1" width="1" height="1" fill="#2A6A2A"/><rect x="15" y="1" width="1" height="1" fill="#000"/><rect x="0" y="2" width="1" height="1" fill="#2A6A2A"/><rect x="1" y="2" width="2" height="1" fill="#3A963A"/><rect x="3" y="2" width="1" height="1" fill="#D8FFD0"/><rect x="4" y="2" width="1" height="1" fill="#000"/><rect x="5" y="2" width="1" height="1" fill="#3A963A"/><rect x="6" y="2" width="1" height="1" fill="#D8FFD0"/><rect x="7" y="2" width="1" height="1" fill="#000"/><rect x="8" y="2" width="1" height="1" fill="#3A963A"/><rect x="9" y="2" width="1" height="1" fill="#D8FFD0"/><rect x="10" y="2" width="1" height="1" fill="#000"/><rect x="11" y="2" width="1" height="1" fill="#3A963A"/><rect x="12" y="2" width="1" height="1" fill="#D8FFD0"/><rect x="13" y="2" width="1" height="1" fill="#000"/><rect x="14" y="2" width="1" height="1" fill="#3A963A"/><rect x="15" y="2" width="1" height="1" fill="#000"/><rect x="0" y="3" width="1" height="1" fill="#2A6A2A"/><rect x="1" y="3" width="2" height="1" fill="#3A963A"/><rect x="3" y="3" width="1" height="1" fill="#D8FFD0"/><rect x="4" y="3" width="1" height="1" fill="#000"/><rect x="5" y="3" width="1" height="1" fill="#3A963A"/><rect x="6" y="3" width="1" height="1" fill="#D8FFD0"/><rect x="7" y="3" width="1" height="1" fill="#000"/><rect x="8" y="3" width="1" height="1" fill="#3A963A"/><rect x="9" y="3" width="1" height="1" fill="#D8FFD0"/><rect x="10" y="3" width="1" height="1" fill="#000"/><rect x="11" y="3" width="1" height="1" fill="#3A963A"/><rect x="12" y="3" width="1" height="1" fill="#D8FFD0"/><rect x="13" y="3" width="1" height="1" fill="#000"/><rect x="14" y="3" width="1" height="1" fill="#3A963A"/><rect x="15" y="3" width="1" height="1" fill="#000"/><rect x="0" y="4" width="1" height="1" fill="#2A6A2A"/><rect x="1" y="4" width="2" height="1" fill="#3A963A"/><rect x="3" y="4" width="2" height="1" fill="#000"/><rect x="5" y="4" width="1" height="1" fill="#3A963A"/><rect x="6" y="4" width="2" height="1" fill="#000"/><rect x="8" y="4" width="1" height="1" fill="#3A963A"/><rect x="9" y="4" width="2" height="1" fill="#000"/><rect x="11" y="4" width="1" height="1" fill="#3A963A"/><rect x="12" y="4" width="2" height="1" fill="#000"/><rect x="14" y="4" width="1" height="1" fill="#3A963A"/><rect x="15" y="4" width="1" height="1" fill="#000"/><rect x="0" y="5" width="1" height="1" fill="#000"/><rect x="1" y="5" width="13" height="1" fill="#3A963A"/><rect x="14" y="5" width="1" height="1" fill="#2A6A2A"/><rect x="15" y="5" width="1" height="1" fill="#000"/><rect x="1" y="6" width="1" height="1" fill="#3A963A"/><rect x="2" y="6" width="1" height="1" fill="#F0F0A0"/><rect x="3" y="6" width="1" height="1" fill="#3A963A"/><rect x="4" y="6" width="1" height="1" fill="#F0F0A0"/><rect x="5" y="6" width="1" height="1" fill="#3A963A"/><rect x="6" y="6" width="1" height="1" fill="#F0F0A0"/><rect x="7" y="6" width="1" height="1" fill="#000"/><rect x="8" y="6" width="1" height="1" fill="#F0F0A0"/><rect x="9" y="6" width="1" height="1" fill="#3A963A"/><rect x="10" y="6" width="1" height="1" fill="#F0F0A0"/><rect x="11" y="6" width="1" height="1" fill="#3A963A"/><rect x="12" y="6" width="1" height="1" fill="#F0F0A0"/><rect x="13" y="6" width="1" height="1" fill="#3A963A"/><rect x="14" y="6" width="1" height="1" fill="#2A6A2A"/><rect x="15" y="6" width="1" height="1" fill="#000"/><rect x="1" y="7" width="6" height="1" fill="#000"/><rect x="9" y="7" width="7" height="1" fill="#000"/></svg>
<div class="t" style="left:235px;top:349px;;letter-spacing:-0.100px;transform:scaleX(0.9300);transform-origin:0 0">Šířka pásma</div>
<div class="t" style="left:402px;top:349px;;letter-spacing:-0.100px;transform:scaleX(0.9866);transform-origin:0 0">3214 MB/s</div>
<svg class="a" style="left:202px;top:383px" width="14" height="8" shape-rendering="crispEdges"><rect x="6" y="0" width="2" height="1" fill="#000"/><rect x="4" y="1" width="2" height="1" fill="#000"/><rect x="6" y="1" width="2" height="1" fill="#fff"/><rect x="8" y="1" width="2" height="1" fill="#000"/><rect x="2" y="2" width="2" height="1" fill="#000"/><rect x="4" y="2" width="2" height="1" fill="#fff"/><rect x="6" y="2" width="2" height="1" fill="#000"/><rect x="8" y="2" width="2" height="1" fill="#fff"/><rect x="10" y="2" width="2" height="1" fill="#000"/><rect x="0" y="3" width="6" height="1" fill="#000"/><rect x="6" y="3" width="2" height="1" fill="#fff"/><rect x="8" y="3" width="2" height="1" fill="#000"/><rect x="10" y="3" width="2" height="1" fill="#fff"/><rect x="12" y="3" width="2" height="1" fill="#000"/><rect x="0" y="4" width="2" height="1" fill="#000"/><rect x="2" y="4" width="1" height="1" fill="#fff"/><rect x="3" y="4" width="1" height="1" fill="#000"/><rect x="4" y="4" width="1" height="1" fill="#fff"/><rect x="5" y="4" width="3" height="1" fill="#000"/><rect x="8" y="4" width="2" height="1" fill="#fff"/><rect x="10" y="4" width="4" height="1" fill="#000"/><rect x="0" y="5" width="2" height="1" fill="#D0D0D0"/><rect x="2" y="5" width="4" height="1" fill="#000"/><rect x="6" y="5" width="2" height="1" fill="#86C886"/><rect x="8" y="5" width="4" height="1" fill="#000"/><rect x="1" y="6" width="3" height="1" fill="#D0D0D0"/><rect x="4" y="6" width="2" height="1" fill="#000"/><rect x="6" y="6" width="2" height="1" fill="#86C886"/><rect x="8" y="6" width="2" height="1" fill="#000"/><rect x="3" y="7" width="3" height="1" fill="#D0D0D0"/><rect x="6" y="7" width="2" height="1" fill="#000"/></svg>
<div class="t" style="left:219px;top:383px;;letter-spacing:-0.100px;transform:scaleX(0.9889);transform-origin:0 0">Technické informace o základní de...</div>
<svg class="a" style="left:217px;top:399px" width="16" height="12" shape-rendering="crispEdges"><rect x="7" y="0" width="2" height="1" fill="#000"/><rect x="5" y="1" width="2" height="1" fill="#000"/><rect x="7" y="1" width="2" height="1" fill="#52526C"/><rect x="9" y="1" width="2" height="1" fill="#000"/><rect x="3" y="2" width="2" height="1" fill="#000"/><rect x="5" y="2" width="2" height="1" fill="#52526C"/><rect x="7" y="2" width="2" height="1" fill="#080818"/><rect x="9" y="2" width="2" height="1" fill="#52526C"/><rect x="11" y="2" width="2" height="1" fill="#000"/><rect x="1" y="3" width="2" height="1" fill="#000"/><rect x="3" y="3" width="3" height="1" fill="#52526C"/><rect x="6" y="3" width="4" height="1" fill="#080818"/><rect x="10" y="3" width="3" height="1" fill="#52526C"/><rect x="13" y="3" width="2" height="1" fill="#000"/><rect x="0" y="4" width="1" height="1" fill="#000"/><rect x="1" y="4" width="4" height="1" fill="#52526C"/><rect x="5" y="4" width="6" height="1" fill="#080818"/><rect x="11" y="4" width="4" height="1" fill="#52526C"/><rect x="15" y="4" width="1" height="1" fill="#000"/><rect x="0" y="5" width="1" height="1" fill="#000"/><rect x="1" y="5" width="1" height="1" fill="#C0C0D8"/><rect x="2" y="5" width="5" height="1" fill="#52526C"/><rect x="7" y="5" width="2" height="1" fill="#080818"/><rect x="9" y="5" width="5" height="1" fill="#52526C"/><rect x="14" y="5" width="1" height="1" fill="#34344A"/><rect x="15" y="5" width="1" height="1" fill="#000"/><rect x="0" y="6" width="1" height="1" fill="#000"/><rect x="1" y="6" width="1" height="1" fill="#52526C"/><rect x="2" y="6" width="1" height="1" fill="#C0C0D8"/><rect x="3" y="6" width="10" height="1" fill="#52526C"/><rect x="13" y="6" width="2" height="1" fill="#34344A"/><rect x="15" y="6" width="1" height="1" fill="#000"/><rect x="0" y="7" width="2" height="1" fill="#000"/><rect x="2" y="7" width="1" height="1" fill="#52526C"/><rect x="3" y="7" width="1" height="1" fill="#C0C0D8"/><rect x="4" y="7" width="8" height="1" fill="#52526C"/><rect x="12" y="7" width="2" height="1" fill="#34344A"/><rect x="14" y="7" width="2" height="1" fill="#000"/><rect x="1" y="8" width="3" height="1" fill="#000"/><rect x="4" y="8" width="3" height="1" fill="#52526C"/><rect x="7" y="8" width="1" height="1" fill="#C0C0D8"/><rect x="8" y="8" width="3" height="1" fill="#52526C"/><rect x="11" y="8" width="1" height="1" fill="#34344A"/><rect x="12" y="8" width="3" height="1" fill="#000"/><rect x="3" y="9" width="3" height="1" fill="#000"/><rect x="6" y="9" width="3" height="1" fill="#52526C"/><rect x="9" y="9" width="1" height="1" fill="#34344A"/><rect x="10" y="9" width="3" height="1" fill="#000"/><rect x="5" y="10" width="6" height="1" fill="#000"/><rect x="7" y="11" width="2" height="1" fill="#000"/></svg>
<div class="t" style="left:235px;top:400px;;letter-spacing:-0.100px;transform:scaleX(0.9445);transform-origin:0 0">CPU Sokly/Sloty</div>
<div class="t" style="left:402px;top:400px;;letter-spacing:-0.100px;transform:scaleX(0.9902);transform-origin:0 0">1 Socket 939</div>
<svg class="a" style="left:217px;top:417px" width="16" height="11" viewBox="0 0 16 11"><path d="M0.5 5 L9 0.5 L15.5 3.5 L7 9.5 Z" fill="#58B848" stroke="#103010" stroke-width="0.9"/><path d="M3 5 L9 2 L13 3.8 L7 7.5 Z" fill="#8AE070"/><path d="M7 9.5 L15.5 3.5 L15.5 5 L7 10.5 L0.5 6 L0.5 5 Z" fill="#000"/><path d="M1.5 4 L3 3 M2.5 6 L4 5" stroke="#D8F8C8" stroke-width="0.8"/><circle cx="8" cy="4" r="1" fill="#E8FFD8"/></svg>
<div class="t" style="left:235px;top:417px;;letter-spacing:-0.100px;transform:scaleX(0.9572);transform-origin:0 0">Rozšiřující sloty</div>
<div class="t" style="left:402px;top:417px;;letter-spacing:-0.100px;transform:scaleX(0.9955);transform-origin:0 0">4 PCI, 1 PCI-E x1, 1 PCI-E x4, 1 PCI-E x16</div>
<svg class="a" style="left:217px;top:435px" width="16" height="8" shape-rendering="crispEdges"><rect x="0" y="0" width="15" height="1" fill="#2A6A2A"/><rect x="15" y="0" width="1" height="1" fill="#000"/><rect x="0" y="1" width="1" height="1" fill="#2A6A2A"/><rect x="1" y="1" width="13" height="1" fill="#3A963A"/><rect x="14" y="1" width="1" height="1" fill="#2A6A2A"/><rect x="15" y="1" width="1" height="1" fill="#000"/><rect x="0" y="2" width="1" height="1" fill="#2A6A2A"/><rect x="1" y="2" width="2" height="1" fill="#3A963A"/><rect x="3" y="2" width="1" height="1" fill="#D8FFD0"/><rect x="4" y="2" width="1" height="1" fill="#000"/><rect x="5" y="2" width="1" height="1" fill="#3A963A"/><rect x="6" y="2" width="1" height="1" fill="#D8FFD0"/><rect x="7" y="2" width="1" height="1" fill="#000"/><rect x="8" y="2" width="1" height="1" fill="#3A963A"/><rect x="9" y="2" width="1" height="1" fill="#D8FFD0"/><rect x="10" y="2" width="1" height="1" fill="#000"/><rect x="11" y="2" width="1" height="1" fill="#3A963A"/><rect x="12" y="2" width="1" height="1" fill="#D8FFD0"/><rect x="13" y="2" width="1" height="1" fill="#000"/><rect x="14" y="2" width="1" height="1" fill="#3A963A"/><rect x="15" y="2" width="1" height="1" fill="#000"/><rect x="0" y="3" width="1" height="1" fill="#2A6A2A"/><rect x="1" y="3" width="2" height="1" fill="#3A963A"/><rect x="3" y="3" width="1" height="1" fill="#D8FFD0"/><rect x="4" y="3" width="1" height="1" fill="#000"/><rect x="5" y="3" width="1" height="1" fill="#3A963A"/><rect x="6" y="3" width="1" height="1" fill="#D8FFD0"/><rect x="7" y="3" width="1" height="1" fill="#000"/><rect x="8" y="3" width="1" height="1" fill="#3A963A"/><rect x="9" y="3" width="1" height="1" fill="#D8FFD0"/><rect x="10" y="3" width="1" height="1" fill="#000"/><rect x="11" y="3" width="1" height="1" fill="#3A963A"/><rect x="12" y="3" width="1" height="1" fill="#D8FFD0"/><rect x="13" y="3" width="1" height="1" fill="#000"/><rect x="14" y="3" width="1" height="1" fill="#3A963A"/><rect x="15" y="3" width="1" height="1" fill="#000"/><rect x="0" y="4" width="1" height="1" fill="#2A6A2A"/><rect x="1" y="4" width="2" height="1" fill="#3A963A"/><rect x="3" y="4" width="2" height="1" fill="#000"/><rect x="5" y="4" width="1" height="1" fill="#3A963A"/><rect x="6" y="4" width="2" height="1" fill="#000"/><rect x="8" y="4" width="1" height="1" fill="#3A963A"/><rect x="9" y="4" width="2" height="1" fill="#000"/><rect x="11" y="4" width="1" height="1" fill="#3A963A"/><rect x="12" y="4" width="2" height="1" fill="#000"/><rect x="14" y="4" width="1" height="1" fill="#3A963A"/><rect x="15" y="4" width="1" height="1" fill="#000"/><rect x="0" y="5" width="1" height="1" fill="#000"/><rect x="1" y="5" width="13" height="1" fill="#3A963A"/><rect x="14" y="5" width="1" height="1" fill="#2A6A2A"/><rect x="15" y="5" width="1" height="1" fill="#000"/><rect x="1" y="6" width="1" height="1" fill="#3A963A"/><rect x="2" y="6" width="1" height="1" fill="#F0F0A0"/><rect x="3" y="6" width="1" height="1" fill="#3A963A"/><rect x="4" y="6" width="1" height="1" fill="#F0F0A0"/><rect x="5" y="6" width="1" height="1" fill="#3A963A"/><rect x="6" y="6" width="1" height="1" fill="#F0F0A0"/><rect x="7" y="6" width="1" height="1" fill="#000"/><rect x="8" y="6" width="1" height="1" fill="#F0F0A0"/><rect x="9" y="6" width="1" height="1" fill="#3A963A"/><rect x="10" y="6" width="1" height="1" fill="#F0F0A0"/><rect x="11" y="6" width="1" height="1" fill="#3A963A"/><rect x="12" y="6" width="1" height="1" fill="#F0F0A0"/><rect x="13" y="6" width="1" height="1" fill="#3A963A"/><rect x="14" y="6" width="1" height="1" fill="#2A6A2A"/><rect x="15" y="6" width="1" height="1" fill="#000"/><rect x="1" y="7" width="6" height="1" fill="#000"/><rect x="9" y="7" width="7" height="1" fill="#000"/></svg>
<div class="t" style="left:235px;top:434px;;letter-spacing:-0.100px;transform:scaleX(0.9439);transform-origin:0 0">RAM Sloty</div>
<div class="t" style="left:402px;top:434px;;letter-spacing:-0.100px;transform:scaleX(0.9381);transform-origin:0 0">4 DDR DIMM</div>
<svg class="a" style="left:217px;top:451px" width="16" height="13" viewBox="0 0 16 13"><path d="M0.5 3 L8 0.5 L15.5 2 L8 5 Z" fill="#3A7A58" stroke="#1A3A2A" stroke-width="0.7"/>
<path d="M2 3 L8 1.5 L12 2.3 L7 3.8 Z" fill="#8ABAA0"/>
<path d="M1 6 L5 5 L7 6.5" stroke="#9A9A9A" stroke-width="2.2" fill="none"/>
<path d="M6 7 C9 8 12 9 14.5 11.5" stroke="#5A5A5A" stroke-width="2.6" fill="none" stroke-linecap="round"/>
<path d="M7 7.5 C9.5 8.3 11 9 12.5 10.2" stroke="#D8D8D8" stroke-width="0.9" fill="none"/></svg>
<div class="t" style="left:235px;top:451px;;letter-spacing:-0.095px">Integrovaná zařízení</div>
<div class="t" style="left:402px;top:451px;;letter-spacing:-0.100px;transform:scaleX(0.9743);transform-origin:0 0">Audio, Gigabit LAN</div>
<svg class="a" style="left:218px;top:468px" width="14" height="8" shape-rendering="crispEdges"><rect x="6" y="0" width="2" height="1" fill="#000"/><rect x="4" y="1" width="2" height="1" fill="#000"/><rect x="6" y="1" width="2" height="1" fill="#fff"/><rect x="8" y="1" width="2" height="1" fill="#000"/><rect x="2" y="2" width="2" height="1" fill="#000"/><rect x="4" y="2" width="2" height="1" fill="#fff"/><rect x="6" y="2" width="2" height="1" fill="#000"/><rect x="8" y="2" width="2" height="1" fill="#fff"/><rect x="10" y="2" width="2" height="1" fill="#000"/><rect x="0" y="3" width="6" height="1" fill="#000"/><rect x="6" y="3" width="2" height="1" fill="#fff"/><rect x="8" y="3" width="2" height="1" fill="#000"/><rect x="10" y="3" width="2" height="1" fill="#fff"/><rect x="12" y="3" width="2" height="1" fill="#000"/><rect x="0" y="4" width="2" height="1" fill="#000"/><rect x="2" y="4" width="1" height="1" fill="#fff"/><rect x="3" y="4" width="1" height="1" fill="#000"/><rect x="4" y="4" width="1" height="1" fill="#fff"/><rect x="5" y="4" width="3" height="1" fill="#000"/><rect x="8" y="4" width="2" height="1" fill="#fff"/><rect x="10" y="4" width="4" height="1" fill="#000"/><rect x="0" y="5" width="2" height="1" fill="#D0D0D0"/><rect x="2" y="5" width="4" height="1" fill="#000"/><rect x="6" y="5" width="2" height="1" fill="#86C886"/><rect x="8" y="5" width="4" height="1" fill="#000"/><rect x="1" y="6" width="3" height="1" fill="#D0D0D0"/><rect x="4" y="6" width="2" height="1" fill="#000"/><rect x="6" y="6" width="2" height="1" fill="#86C886"/><rect x="8" y="6" width="2" height="1" fill="#000"/><rect x="3" y="7" width="3" height="1" fill="#D0D0D0"/><rect x="6" y="7" width="2" height="1" fill="#000"/></svg>
<div class="t" style="left:235px;top:468px;;letter-spacing:-0.100px;transform:scaleX(0.9970);transform-origin:0 0">Velikostní faktor (Form Factor)</div>
<div class="t" style="left:402px;top:468px;;letter-spacing:-0.100px;transform:scaleX(0.9569);transform-origin:0 0">ATX</div>
<svg class="a" style="left:218px;top:485px" width="14" height="8" shape-rendering="crispEdges"><rect x="6" y="0" width="2" height="1" fill="#000"/><rect x="4" y="1" width="2" height="1" fill="#000"/><rect x="6" y="1" width="2" height="1" fill="#fff"/><rect x="8" y="1" width="2" height="1" fill="#000"/><rect x="2" y="2" width="2" height="1" fill="#000"/><rect x="4" y="2" width="2" height="1" fill="#fff"/><rect x="6" y="2" width="2" height="1" fill="#000"/><rect x="8" y="2" width="2" height="1" fill="#fff"/><rect x="10" y="2" width="2" height="1" fill="#000"/><rect x="0" y="3" width="6" height="1" fill="#000"/><rect x="6" y="3" width="2" height="1" fill="#fff"/><rect x="8" y="3" width="2" height="1" fill="#000"/><rect x="10" y="3" width="2" height="1" fill="#fff"/><rect x="12" y="3" width="2" height="1" fill="#000"/><rect x="0" y="4" width="2" height="1" fill="#000"/><rect x="2" y="4" width="1" height="1" fill="#fff"/><rect x="3" y="4" width="1" height="1" fill="#000"/><rect x="4" y="4" width="1" height="1" fill="#fff"/><rect x="5" y="4" width="3" height="1" fill="#000"/><rect x="8" y="4" width="2" height="1" fill="#fff"/><rect x="10" y="4" width="4" height="1" fill="#000"/><rect x="0" y="5" width="2" height="1" fill="#D0D0D0"/><rect x="2" y="5" width="4" height="1" fill="#000"/><rect x="6" y="5" width="2" height="1" fill="#86C886"/><rect x="8" y="5" width="4" height="1" fill="#000"/><rect x="1" y="6" width="3" height="1" fill="#D0D0D0"/><rect x="4" y="6" width="2" height="1" fill="#000"/><rect x="6" y="6" width="2" height="1" fill="#86C886"/><rect x="8" y="6" width="2" height="1" fill="#000"/><rect x="3" y="7" width="3" height="1" fill="#D0D0D0"/><rect x="6" y="7" width="2" height="1" fill="#000"/></svg>
<div class="t" style="left:235px;top:485px;;letter-spacing:-0.100px;transform:scaleX(0.9638);transform-origin:0 0">Velikost základní desky</div>
<div class="t" style="left:402px;top:485px;;letter-spacing:-0.100px;transform:scaleX(0.9644);transform-origin:0 0">240 mm x 300 mm</div>
<svg class="a" style="left:217px;top:501px" width="17" height="13" viewBox="0 0 17 13"><g shape-rendering="crispEdges"><rect x="6" y="11" width="1" height="2" fill="#000"/><rect x="8" y="10" width="1" height="2" fill="#000"/><rect x="10" y="9" width="1" height="2" fill="#000"/><rect x="12" y="8" width="1" height="2" fill="#000"/><rect x="14" y="7" width="1" height="2" fill="#000"/><rect x="15" y="5" width="1" height="2" fill="#000"/><polygon points="0.5,7 11,0.5 16,5.5 5.5,11.5" fill="#B4B4B4"/><path d="M1.5 7.5 L5.5 11" stroke="#F4F4F4" stroke-width="1.2"/><path d="M11 1 L16 5.5 L5.5 11.5 L0.5 7" fill="none" stroke="#000" stroke-width="1"/><path d="M0.5 7 L11 0.5" fill="none" stroke="#000" stroke-width="1" stroke-dasharray="1.2 1"/><rect x="10" y="0" width="2" height="1" fill="#000"/></g></svg>
<div class="t" style="left:235px;top:502px;;letter-spacing:-0.100px;transform:scaleX(0.9660);transform-origin:0 0">Čipová sada základní desky</div>
<div class="t" style="left:402px;top:502px;;letter-spacing:-0.006px">nForce4(-Ultra)</div>
<svg class="a" style="left:218px;top:519px" width="14" height="8" shape-rendering="crispEdges"><rect x="6" y="0" width="2" height="1" fill="#000"/><rect x="4" y="1" width="2" height="1" fill="#000"/><rect x="6" y="1" width="2" height="1" fill="#fff"/><rect x="8" y="1" width="2" height="1" fill="#000"/><rect x="2" y="2" width="2" height="1" fill="#000"/><rect x="4" y="2" width="2" height="1" fill="#fff"/><rect x="6" y="2" width="2" height="1" fill="#000"/><rect x="8" y="2" width="2" height="1" fill="#fff"/><rect x="10" y="2" width="2" height="1" fill="#000"/><rect x="0" y="3" width="6" height="1" fill="#000"/><rect x="6" y="3" width="2" height="1" fill="#fff"/><rect x="8" y="3" width="2" height="1" fill="#000"/><rect x="10" y="3" width="2" height="1" fill="#fff"/><rect x="12" y="3" width="2" height="1" fill="#000"/><rect x="0" y="4" width="2" height="1" fill="#000"/><rect x="2" y="4" width="1" height="1" fill="#fff"/><rect x="3" y="4" width="1" height="1" fill="#000"/><rect x="4" y="4" width="1" height="1" fill="#fff"/><rect x="5" y="4" width="3" height="1" fill="#000"/><rect x="8" y="4" width="2" height="1" fill="#fff"/><rect x="10" y="4" width="4" height="1" fill="#000"/><rect x="0" y="5" width="2" height="1" fill="#D0D0D0"/><rect x="2" y="5" width="4" height="1" fill="#000"/><rect x="6" y="5" width="2" height="1" fill="#86C886"/><rect x="8" y="5" width="4" height="1" fill="#000"/><rect x="1" y="6" width="3" height="1" fill="#D0D0D0"/><rect x="4" y="6" width="2" height="1" fill="#000"/><rect x="6" y="6" width="2" height="1" fill="#86C886"/><rect x="8" y="6" width="2" height="1" fill="#000"/><rect x="3" y="7" width="3" height="1" fill="#D0D0D0"/><rect x="6" y="7" width="2" height="1" fill="#000"/></svg>
<div class="t" style="left:235px;top:519px;;letter-spacing:-0.100px;transform:scaleX(0.9946);transform-origin:0 0">Zvláštnosti</div>
<div class="t" style="left:402px;top:519px;;letter-spacing:-0.100px;transform:scaleX(0.9843);transform-origin:0 0">CoreCell, Dynamic Overclocking Technology</div>
<svg class="a" style="left:202px;top:553px" width="14" height="8" shape-rendering="crispEdges"><rect x="6" y="0" width="2" height="1" fill="#000"/><rect x="4" y="1" width="2" height="1" fill="#000"/><rect x="6" y="1" width="2" height="1" fill="#fff"/><rect x="8" y="1" width="2" height="1" fill="#000"/><rect x="2" y="2" width="2" height="1" fill="#000"/><rect x="4" y="2" width="2" height="1" fill="#fff"/><rect x="6" y="2" width="2" height="1" fill="#000"/><rect x="8" y="2" width="2" height="1" fill="#fff"/><rect x="10" y="2" width="2" height="1" fill="#000"/><rect x="0" y="3" width="6" height="1" fill="#000"/><rect x="6" y="3" width="2" height="1" fill="#fff"/><rect x="8" y="3" width="2" height="1" fill="#000"/><rect x="10" y="3" width="2" height="1" fill="#fff"/><rect x="12" y="3" width="2" height="1" fill="#000"/><rect x="0" y="4" width="2" height="1" fill="#000"/><rect x="2" y="4" width="1" height="1" fill="#fff"/><rect x="3" y="4" width="1" height="1" fill="#000"/><rect x="4" y="4" width="1" height="1" fill="#fff"/><rect x="5" y="4" width="3" height="1" fill="#000"/><rect x="8" y="4" width="2" height="1" fill="#fff"/><rect x="10" y="4" width="4" height="1" fill="#000"/><rect x="0" y="5" width="2" height="1" fill="#D0D0D0"/><rect x="2" y="5" width="4" height="1" fill="#000"/><rect x="6" y="5" width="2" height="1" fill="#86C886"/><rect x="8" y="5" width="4" height="1" fill="#000"/><rect x="1" y="6" width="3" height="1" fill="#D0D0D0"/><rect x="4" y="6" width="2" height="1" fill="#000"/><rect x="6" y="6" width="2" height="1" fill="#86C886"/><rect x="8" y="6" width="2" height="1" fill="#000"/><rect x="3" y="7" width="3" height="1" fill="#D0D0D0"/><rect x="6" y="7" width="2" height="1" fill="#000"/></svg>
<div class="t" style="left:219px;top:553px;;letter-spacing:-0.100px;transform:scaleX(0.9687);transform-origin:0 0">Výrobce základní desky</div>
<svg class="a" style="left:218px;top:570px" width="14" height="8" shape-rendering="crispEdges"><rect x="6" y="0" width="2" height="1" fill="#000"/><rect x="4" y="1" width="2" height="1" fill="#000"/><rect x="6" y="1" width="2" height="1" fill="#fff"/><rect x="8" y="1" width="2" height="1" fill="#000"/><rect x="2" y="2" width="2" height="1" fill="#000"/><rect x="4" y="2" width="2" height="1" fill="#fff"/><rect x="6" y="2" width="2" height="1" fill="#000"/><rect x="8" y="2" width="2" height="1" fill="#fff"/><rect x="10" y="2" width="2" height="1" fill="#000"/><rect x="0" y="3" width="6" height="1" fill="#000"/><rect x="6" y="3" width="2" height="1" fill="#fff"/><rect x="8" y="3" width="2" height="1" fill="#000"/><rect x="10" y="3" width="2" height="1" fill="#fff"/><rect x="12" y="3" width="2" height="1" fill="#000"/><rect x="0" y="4" width="2" height="1" fill="#000"/><rect x="2" y="4" width="1" height="1" fill="#fff"/><rect x="3" y="4" width="1" height="1" fill="#000"/><rect x="4" y="4" width="1" height="1" fill="#fff"/><rect x="5" y="4" width="3" height="1" fill="#000"/><rect x="8" y="4" width="2" height="1" fill="#fff"/><rect x="10" y="4" width="4" height="1" fill="#000"/><rect x="0" y="5" width="2" height="1" fill="#D0D0D0"/><rect x="2" y="5" width="4" height="1" fill="#000"/><rect x="6" y="5" width="2" height="1" fill="#86C886"/><rect x="8" y="5" width="4" height="1" fill="#000"/><rect x="1" y="6" width="3" height="1" fill="#D0D0D0"/><rect x="4" y="6" width="2" height="1" fill="#000"/><rect x="6" y="6" width="2" height="1" fill="#86C886"/><rect x="8" y="6" width="2" height="1" fill="#000"/><rect x="3" y="7" width="3" height="1" fill="#D0D0D0"/><rect x="6" y="7" width="2" height="1" fill="#000"/></svg>
<div class="t" style="left:235px;top:570px;;letter-spacing:-0.100px;transform:scaleX(0.9761);transform-origin:0 0">Jméno firmy</div>
<div class="t" style="left:402px;top:570px;;letter-spacing:-0.014px">Micro-Star International</div>
<svg class="a" style="left:218px;top:587px" width="14" height="8" shape-rendering="crispEdges"><rect x="6" y="0" width="2" height="1" fill="#000"/><rect x="4" y="1" width="2" height="1" fill="#000"/><rect x="6" y="1" width="2" height="1" fill="#fff"/><rect x="8" y="1" width="2" height="1" fill="#000"/><rect x="2" y="2" width="2" height="1" fill="#000"/><rect x="4" y="2" width="2" height="1" fill="#fff"/><rect x="6" y="2" width="2" height="1" fill="#000"/><rect x="8" y="2" width="2" height="1" fill="#fff"/><rect x="10" y="2" width="2" height="1" fill="#000"/><rect x="0" y="3" width="6" height="1" fill="#000"/><rect x="6" y="3" width="2" height="1" fill="#fff"/><rect x="8" y="3" width="2" height="1" fill="#000"/><rect x="10" y="3" width="2" height="1" fill="#fff"/><rect x="12" y="3" width="2" height="1" fill="#000"/><rect x="0" y="4" width="2" height="1" fill="#000"/><rect x="2" y="4" width="1" height="1" fill="#fff"/><rect x="3" y="4" width="1" height="1" fill="#000"/><rect x="4" y="4" width="1" height="1" fill="#fff"/><rect x="5" y="4" width="3" height="1" fill="#000"/><rect x="8" y="4" width="2" height="1" fill="#fff"/><rect x="10" y="4" width="4" height="1" fill="#000"/><rect x="0" y="5" width="2" height="1" fill="#D0D0D0"/><rect x="2" y="5" width="4" height="1" fill="#000"/><rect x="6" y="5" width="2" height="1" fill="#86C886"/><rect x="8" y="5" width="4" height="1" fill="#000"/><rect x="1" y="6" width="3" height="1" fill="#D0D0D0"/><rect x="4" y="6" width="2" height="1" fill="#000"/><rect x="6" y="6" width="2" height="1" fill="#86C886"/><rect x="8" y="6" width="2" height="1" fill="#000"/><rect x="3" y="7" width="3" height="1" fill="#D0D0D0"/><rect x="6" y="7" width="2" height="1" fill="#000"/></svg>
<svg class="a" style="left:217px;top:593px" width="7" height="7" viewBox="0 0 7 7"><rect x="0.5" y="0.5" width="6" height="6" fill="#fff" stroke="#000" shape-rendering="crispEdges"/><path d="M2 5 L2 3.5 Q2 2 4 2 L5 2 M3.8 1 L5 2 L3.8 3" stroke="#000" stroke-width="0.9" fill="none"/></svg>
<div class="t" style="left:235px;top:587px;;letter-spacing:-0.100px;transform:scaleX(0.9753);transform-origin:0 0">Výrobní informace</div>
<div class="t" style="left:402px;top:587px;;letter-spacing:0.101px"><span class="lnk">http://www.msi.com.tw/program/products/mainboard/mbd/pro_mbd_list...</span></div>
<svg class="a" style="left:218px;top:604px" width="14" height="8" shape-rendering="crispEdges"><rect x="6" y="0" width="2" height="1" fill="#000"/><rect x="4" y="1" width="2" height="1" fill="#000"/><rect x="6" y="1" width="2" height="1" fill="#fff"/><rect x="8" y="1" width="2" height="1" fill="#000"/><rect x="2" y="2" width="2" height="1" fill="#000"/><rect x="4" y="2" width="2" height="1" fill="#fff"/><rect x="6" y="2" width="2" height="1" fill="#000"/><rect x="8" y="2" width="2" height="1" fill="#fff"/><rect x="10" y="2" width="2" height="1" fill="#000"/><rect x="0" y="3" width="6" height="1" fill="#000"/><rect x="6" y="3" width="2" height="1" fill="#fff"/><rect x="8" y="3" width="2" height="1" fill="#000"/><rect x="10" y="3" width="2" height="1" fill="#fff"/><rect x="12" y="3" width="2" height="1" fill="#000"/><rect x="0" y="4" width="2" height="1" fill="#000"/><rect x="2" y="4" width="1" height="1" fill="#fff"/><rect x="3" y="4" width="1" height="1" fill="#000"/><rect x="4" y="4" width="1" height="1" fill="#fff"/><rect x="5" y="4" width="3" height="1" fill="#000"/><rect x="8" y="4" width="2" height="1" fill="#fff"/><rect x="10" y="4" width="4" height="1" fill="#000"/><rect x="0" y="5" width="2" height="1" fill="#D0D0D0"/><rect x="2" y="5" width="4" height="1" fill="#000"/><rect x="6" y="5" width="2" height="1" fill="#86C886"/><rect x="8" y="5" width="4" height="1" fill="#000"/><rect x="1" y="6" width="3" height="1" fill="#D0D0D0"/><rect x="4" y="6" width="2" height="1" fill="#000"/><rect x="6" y="6" width="2" height="1" fill="#86C886"/><rect x="8" y="6" width="2" height="1" fill="#000"/><rect x="3" y="7" width="3" height="1" fill="#D0D0D0"/><rect x="6" y="7" width="2" height="1" fill="#000"/></svg>
<svg class="a" style="left:217px;top:610px" width="7" height="7" viewBox="0 0 7 7"><rect x="0.5" y="0.5" width="6" height="6" fill="#fff" stroke="#000" shape-rendering="crispEdges"/><path d="M2 5 L2 3.5 Q2 2 4 2 L5 2 M3.8 1 L5 2 L3.8 3" stroke="#000" stroke-width="0.9" fill="none"/></svg>
<div class="t" style="left:235px;top:604px;;letter-spacing:-0.100px;transform:scaleX(0.9511);transform-origin:0 0">BIOS Download</div>
<div class="t" style="left:402px;top:604px;;letter-spacing:0.135px"><span class="lnk">http://www.msi.com.tw/program/support/bios/bos/spt_bos_list.php</span></div>
<div class="sunk" style="left:0;top:816px;width:481px;height:20px"></div>
<div class="sunk" style="left:482px;top:816px;width:670px;height:20px"></div>
<svg class="a" style="left:3px;top:821px" width="14" height="8" shape-rendering="crispEdges"><rect x="6" y="0" width="2" height="1" fill="#000"/><rect x="4" y="1" width="2" height="1" fill="#000"/><rect x="6" y="1" width="2" height="1" fill="#fff"/><rect x="8" y="1" width="2" height="1" fill="#000"/><rect x="2" y="2" width="2" height="1" fill="#000"/><rect x="4" y="2" width="2" height="1" fill="#fff"/><rect x="6" y="2" width="2" height="1" fill="#000"/><rect x="8" y="2" width="2" height="1" fill="#fff"/><rect x="10" y="2" width="2" height="1" fill="#000"/><rect x="0" y="3" width="6" height="1" fill="#000"/><rect x="6" y="3" width="2" height="1" fill="#fff"/><rect x="8" y="3" width="2" height="1" fill="#000"/><rect x="10" y="3" width="2" height="1" fill="#fff"/><rect x="12" y="3" width="2" height="1" fill="#000"/><rect x="0" y="4" width="2" height="1" fill="#000"/><rect x="2" y="4" width="1" height="1" fill="#fff"/><rect x="3" y="4" width="1" height="1" fill="#000"/><rect x="4" y="4" width="1" height="1" fill="#fff"/><rect x="5" y="4" width="3" height="1" fill="#000"/><rect x="8" y="4" width="2" height="1" fill="#fff"/><rect x="10" y="4" width="4" height="1" fill="#000"/><rect x="0" y="5" width="2" height="1" fill="#D0D0D0"/><rect x="2" y="5" width="4" height="1" fill="#000"/><rect x="6" y="5" width="2" height="1" fill="#86C886"/><rect x="8" y="5" width="4" height="1" fill="#000"/><rect x="1" y="6" width="3" height="1" fill="#D0D0D0"/><rect x="4" y="6" width="2" height="1" fill="#000"/><rect x="6" y="6" width="2" height="1" fill="#86C886"/><rect x="8" y="6" width="2" height="1" fill="#000"/><rect x="3" y="7" width="3" height="1" fill="#D0D0D0"/><rect x="6" y="7" width="2" height="1" fill="#000"/></svg>
<div class="t" style="left:21px;top:820px;;letter-spacing:-0.100px;transform:scaleX(0.9480);transform-origin:0 0">Základní deska</div>
<div class="t" style="left:484px;top:820px;;letter-spacing:0.019px">Copyright (c) 2003-2005 Lavalys, Inc.</div>
<div class="a" style="left:0;top:836px;width:1152px;height:28px;background:#D4D0C8"></div>
<div class="hl" style="left:0;top:837px;width:1152px;background:#fff"></div>
<div class="btn" style="left:2px;top:840px;width:52px;height:22px"></div>
<svg class="a" style="left:4px;top:843px" width="17" height="16" viewBox="0 0 17 16"><path d="M1 2 Q4 0.5 8 2 L7 7.5 Q3.5 6 0 7.5 Z" fill="#F06A20"/>
<path d="M9 2.2 Q12.5 3.5 16 2 L15 7.5 Q11.5 9 8 7.6 Z" fill="#6AC030"/>
<path d="M0 8.5 Q3.5 7 7 8.5 L6 14 Q2.5 12.5 -0.5 14 Z" fill="#3A7AE8"/>
<path d="M8 8.6 Q11.5 10 15 8.5 L14 14 Q10.5 15.5 7 14 Z" fill="#F8C820"/></svg>
<div class="t" style="left:22px;top:846px;font-weight:bold;font-size:12px;letter-spacing:0.200px;transform:scaleX(1.0304);transform-origin:0 0">Start</div>
<div class="a" style="left:61px;top:841px;width:3px;height:19px;border-left:1px solid #fff;border-top:1px solid #fff;border-right:1px solid #808080;border-bottom:1px solid #808080"></div>
<div class="a" style="left:359px;top:841px;width:3px;height:19px;border-left:1px solid #fff;border-top:1px solid #fff;border-right:1px solid #808080;border-bottom:1px solid #808080"></div>
<svg class="a" style="left:70px;top:842px" width="18" height="17" viewBox="0 0 18 17"><path d="M1.5 1.5 H7 C11 1.5 12.5 4 12.5 6.5 C12.5 9 11 11.5 7 11.5 H1.5 Z" fill="#E8001C" stroke="#000" stroke-width="1.2"/><path d="M4.5 4.2 H6.8 C8.8 4.2 9.6 5.2 9.6 6.5 C9.6 7.8 8.8 8.8 6.8 8.8 H4.5 Z" fill="#000"/><path d="M15.6 9.2 A3.9 3.9 0 1 0 15.6 13.8" stroke="#000" stroke-width="4.4" fill="none"/><path d="M15.2 9.6 A3.6 3.6 0 1 0 15.2 13.4" stroke="#E8001C" stroke-width="2.2" fill="none"/><rect x="1" y="11" width="6" height="6" fill="#000"/><path d="M2.6 16.5 V12.3 H4.6 Q6 12.3 6 13.5 Q6 14.6 4.6 14.6 H2.6" stroke="#fff" stroke-width="1.1" fill="none"/></svg>
<svg class="a" style="left:95px;top:843px" width="16" height="16" viewBox="0 0 16 16"><circle cx="8" cy="8" r="7" fill="#E8F0E8" stroke="#70A070"/><path d="M6 11 L6 4 L12 3 L12 10" stroke="#2A8A3A" stroke-width="1.5" fill="none"/><circle cx="5" cy="11" r="1.6" fill="#2A8A3A"/><circle cx="11" cy="10" r="1.6" fill="#2A8A3A"/></svg>
<svg class="a" style="left:117px;top:843px" width="16" height="16" viewBox="0 0 16 16"><circle cx="8.5" cy="7.5" r="6.5" fill="#2A5AB8"/><circle cx="9.5" cy="6" r="3" fill="#6AA8F0"/><path d="M3.5 1.5 C0 5 0.5 12 5 14.5 C9 16.5 14.5 14 15.5 8.5 C13.5 12 9.5 13 7 11.5 C4.5 10 4.5 7 6.5 5.5 C5 5 4 3.5 3.5 1.5 Z" fill="#EA6A10"/><path d="M2.5 6 C2 10 4 13 7 14" stroke="#F8B830" stroke-width="1.2" fill="none"/></svg>
<svg class="a" style="left:140px;top:842px" width="16" height="18" viewBox="0 0 16 18"><path d="M1 6 L7 1 L15 5 L10 10 Z" fill="#4A90E0" stroke="#2A5AA8" stroke-width="0.6"/><path d="M1 6 L10 10 L10 14 L1 10 Z" fill="#E8EEF8" stroke="#8A9AB8" stroke-width="0.6"/><circle cx="11.5" cy="13.5" r="3.5" fill="#2AA82A"/><path d="M10.5 11.8 L13.5 13.5 L10.5 15.2 Z" fill="#fff"/></svg>
<svg class="a" style="left:163px;top:843px" width="16" height="16" viewBox="0 0 16 16"><circle cx="8" cy="8" r="7.5" fill="#E0E0E0" stroke="#A0A0A0"/><circle cx="8" cy="8" r="5.5" fill="#D82020"/><path d="M4 10 Q6 4 8 7 Q10 3 12 10" stroke="#fff" stroke-width="1.6" fill="none"/></svg>
<svg class="a" style="left:188px;top:843px" width="13" height="17" viewBox="0 0 13 17"><path d="M1 1 L12 1 L12 9 L6.5 15 L1 9 Z" fill="#3A6A8A" stroke="#1A2A3A" stroke-width="0.8"/><path d="M3 9 L10 9 L6.5 13 Z" fill="#E8F0F8"/></svg>
<svg class="a" style="left:210px;top:843px" width="17" height="16" viewBox="0 0 17 16"><circle cx="9" cy="8.5" r="6" fill="none" stroke="#2A8AE0" stroke-width="2.5"/><path d="M4 8.5 L14 8.5" stroke="#2A8AE0" stroke-width="2"/><path d="M1 14 Q3 2 16 2" stroke="#E8B020" stroke-width="1.4" fill="none"/></svg>
<svg class="a" style="left:233px;top:843px" width="16" height="16" viewBox="0 0 16 16"><rect x="2" y="2" width="13" height="12" fill="#F0F4FF" stroke="#6A7AB8"/><rect x="2" y="2" width="13" height="3" fill="#4A6AC8"/><rect x="1" y="1" width="3" height="3" fill="#2A3A98"/><path d="M1 15 L5 10" stroke="#C87A30" stroke-width="1.5"/></svg>
<svg class="a" style="left:255px;top:843px" width="16" height="16" viewBox="0 0 16 16"><path d="M1 9 L9 1 L15 6 L7 15 Z" fill="#F0A020" stroke="#8A5A10" stroke-width="0.8"/><path d="M4 9 L9 4 L12 6.5 L7 12 Z" fill="#F8E0A0"/><path d="M3 12 L13 3" stroke="#605040" stroke-width="1"/></svg>
<svg class="a" style="left:278px;top:843px" width="16" height="16" viewBox="0 0 16 16"><circle cx="8" cy="8" r="7.3" fill="#E8E8F8" stroke="#4A4AA8" stroke-width="1.2"/><circle cx="8" cy="8" r="5" fill="#2A4AB8"/><path d="M6.5 5.5 L11 8 L6.5 10.5 Z" fill="#fff"/></svg>
<svg class="a" style="left:301px;top:843px" width="16" height="16" viewBox="0 0 16 16"><rect x="1.5" y="2.5" width="13" height="12" rx="2" fill="#2A7AE0" stroke="#1A3A98"/><rect x="4" y="5" width="8" height="7" fill="#E8F4FF"/><path d="M5 11 L11 5" stroke="#2A7AE0" stroke-width="1.4"/><path d="M12 2 L15 4" stroke="#F08020" stroke-width="1.5"/></svg>
<div class="btn" style="left:365px;top:840px;width:146px;height:22px"></div><svg class="a" style="left:369px;top:843px" width="16" height="16" viewBox="0 0 16 16"><circle cx="8.5" cy="7.5" r="6.5" fill="#2A5AB8"/><circle cx="9.5" cy="6" r="3" fill="#6AA8F0"/><path d="M3.5 1.5 C0 5 0.5 12 5 14.5 C9 16.5 14.5 14 15.5 8.5 C13.5 12 9.5 13 7 11.5 C4.5 10 4.5 7 6.5 5.5 C5 5 4 3.5 3.5 1.5 Z" fill="#EA6A10"/><path d="M2.5 6 C2 10 4 13 7 14" stroke="#F8B830" stroke-width="1.2" fill="none"/></svg><div class="t" style="left:388px;top:846px;color:#000;font-weight:normal;letter-spacing:-0.100px;transform:scaleX(0.9911);transform-origin:0 0">Ovladač základní desk...</div>
<div class="btn" style="left:514px;top:840px;width:146px;height:22px"></div><svg class="a" style="left:518px;top:843px" width="16" height="16" viewBox="0 0 16 16"><path d="M1 4 L6 4 L7 5 L14 5 L14 14 L1 14 Z" fill="#E8C850" stroke="#987820" stroke-width="0.8"/><path d="M1.5 7 L15 7 L14 14 L1 14 Z" fill="#F8E498" stroke="#987820" stroke-width="0.8"/></svg><div class="t" style="left:537px;top:846px;color:#000;font-weight:normal;letter-spacing:-0.100px;transform:scaleX(0.9588);transform-origin:0 0">Program Files</div>
<div class="a" style="left:663px;top:840px;width:146px;height:22px;background:#0A246A"></div><svg class="a" style="left:667px;top:842px" width="17" height="17" viewBox="0 0 17 17"><path d="M1 6 L9 6 L9 16 L1 16 Z" fill="#F8F8F8" stroke="#202020" stroke-width="0.8"/><path d="M2.5 9 L7 9 M2.5 11.3 L7 11.3 M2.5 13.6 L7 13.6" stroke="#707070" stroke-width="1"/><path d="M7.5 5.5 C7.5 0.8 16 0.5 16 5 C16 7.5 13.2 8 13 10.5 L10.2 10.5 C10.2 6.8 13 6.5 13 5 C13 3.2 10.5 3.3 10.5 5.5 Z" fill="#F8F020" stroke="#000" stroke-width="0.9"/><rect x="10.2" y="11.5" width="2.8" height="2.8" fill="#F8F020" stroke="#000" stroke-width="0.8"/></svg><div class="t" style="left:686px;top:846px;color:#fff;font-weight:normal;letter-spacing:-0.100px;transform:scaleX(0.9365);transform-origin:0 0">EVEREST Home Editio...</div>
<div class="a" style="left:812px;top:840px;width:146px;height:22px;background:#ECEAE6;border-top:1px solid #404040;border-left:1px solid #404040;border-right:1px solid #fff;border-bottom:1px solid #fff;box-shadow:inset 1px 1px 0 #808080"></div><svg class="a" style="left:816px;top:843px" width="16" height="16" viewBox="0 0 16 16"><defs><radialGradient id="gi816_843" cx="40%" cy="35%" r="65%"><stop offset="0" stop-color="#8ADA6A"/><stop offset="0.6" stop-color="#38A02A"/><stop offset="1" stop-color="#1C7018"/></radialGradient></defs>
<circle cx="8.0" cy="8.0" r="7.3" fill="url(#gi816_843)" stroke="#D8F0D0" stroke-width="1.3"/>
<rect x="6.72" y="6.72" width="2.56" height="5.76" fill="#F4FFF0"/><circle cx="8.0" cy="4.48" r="1.44" fill="#F4FFF0"/></svg><div class="t" style="left:835px;top:846px;color:#000;font-weight:bold;letter-spacing:-0.077px">EVEREST Home Edit...</div>
<div class="sunk" style="left:965px;top:840px;width:186px;height:22px"></div>
<svg class="a" style="left:969px;top:848px" width="10" height="7" viewBox="0 0 10 7"><path d="M4 0.5 L1 3.5 L4 6.5 M8.5 0.5 L5.5 3.5 L8.5 6.5" stroke="#000" stroke-width="1.6" fill="none"/></svg>
<svg class="a" style="left:983px;top:843px" width="16" height="16" viewBox="0 0 16 16"><defs><radialGradient id="gi983_843" cx="40%" cy="35%" r="65%"><stop offset="0" stop-color="#8ADA6A"/><stop offset="0.6" stop-color="#38A02A"/><stop offset="1" stop-color="#1C7018"/></radialGradient></defs>
<circle cx="8.0" cy="8.0" r="7.3" fill="url(#gi983_843)" stroke="#D8F0D0" stroke-width="1.3"/>
<rect x="6.72" y="6.72" width="2.56" height="5.76" fill="#F4FFF0"/><circle cx="8.0" cy="4.48" r="1.44" fill="#F4FFF0"/></svg>
<svg class="a" style="left:1001px;top:843px" width="16" height="16" viewBox="0 0 16 16"><defs><linearGradient id="og" x1="0" y1="0" x2="0" y2="1"><stop offset="0" stop-color="#F89040"/><stop offset="1" stop-color="#C84A10"/></linearGradient></defs><rect x="0.5" y="0.5" width="15" height="15" rx="1.5" fill="url(#og)" stroke="#903810"/><path d="M4 12.5 L12 12.5 M4 10.5 L12 10.5" stroke="#fff" stroke-width="1"/><path d="M5 9 L9.5 3 M7 9 Q8 6 11 7" stroke="#fff" stroke-width="1.1" fill="none"/></svg>
<svg class="a" style="left:1019px;top:843px" width="15" height="16" viewBox="0 0 15 16"><path d="M7.5 0.8 L14 3 L13.2 9.5 L7.5 15 L1.8 9.5 L1 3 Z" fill="#E8E040" stroke="#404830" stroke-width="1"/><path d="M7.5 2.5 L12 4 L11.5 9 L7.5 13" fill="#C8B820"/><rect x="6.8" y="4.5" width="1.5" height="4.5" fill="#000"/><rect x="6.8" y="10" width="1.5" height="1.5" fill="#000"/></svg>
<svg class="a" style="left:1037px;top:843px" width="16" height="16" viewBox="0 0 16 16"><defs><radialGradient id="rg" cx="40%" cy="35%" r="70%"><stop offset="0" stop-color="#F88A40"/><stop offset="1" stop-color="#A82808"/></radialGradient></defs><circle cx="8" cy="8" r="7.5" fill="url(#rg)"/><path d="M10.5 4.5 A4 4 0 1 0 12 8" stroke="#fff" stroke-width="2.2" fill="none"/></svg>
<svg class="a" style="left:1055px;top:843px" width="17" height="16" viewBox="0 0 17 16"><circle cx="5.5" cy="3.5" r="3" fill="#F0C020" stroke="#705010" stroke-width="0.8"/><path d="M0.8 14.5 Q1 6.5 5.5 6.5 Q10 6.5 10 14.5 Z" fill="#F0C020" stroke="#705010" stroke-width="0.8"/><circle cx="9.5" cy="5" r="2.5" fill="#F8D840" stroke="#705010" stroke-width="0.7"/><path d="M11.5 7 L16.5 15.5 L6.5 15.5 Z" fill="#F8E040" stroke="#303000" stroke-width="0.8"/><rect x="11" y="10" width="1.2" height="3" fill="#000"/></svg>
<svg class="a" style="left:1073px;top:843px" width="17" height="16" viewBox="0 0 17 16"><path d="M1 11 L6.5 6 L6.5 8.5 L12 8.5 L12 13 L6.5 13 L6.5 15.5 Z" fill="#F0A050" stroke="#A05A20" stroke-width="0.7"/><path d="M16 5.5 L10.5 0.5 L10.5 3 L5 3 C4 3 3.5 5 4 8 L10.5 8 L10.5 10.5 Z" fill="#3AB03A" stroke="#106A10" stroke-width="0.7"/></svg>
<svg class="a" style="left:1091px;top:843px" width="16" height="16" viewBox="0 0 16 16"><rect x="0.5" y="1" width="10" height="14" rx="2" fill="#E8C030" stroke="#8A6A10" stroke-width="0.8"/><path d="M1 5.5 L10 5.5 M1 10 L10 10" stroke="#8A6A10" stroke-width="0.9"/><path d="M12.5 1 L12.5 15 M14.5 2 L14.5 14" stroke="#A0A8C0" stroke-width="1"/></svg>
<div class="t" style="left:1114px;top:846px;;letter-spacing:-0.008px">13:46</div>
</body></html>
